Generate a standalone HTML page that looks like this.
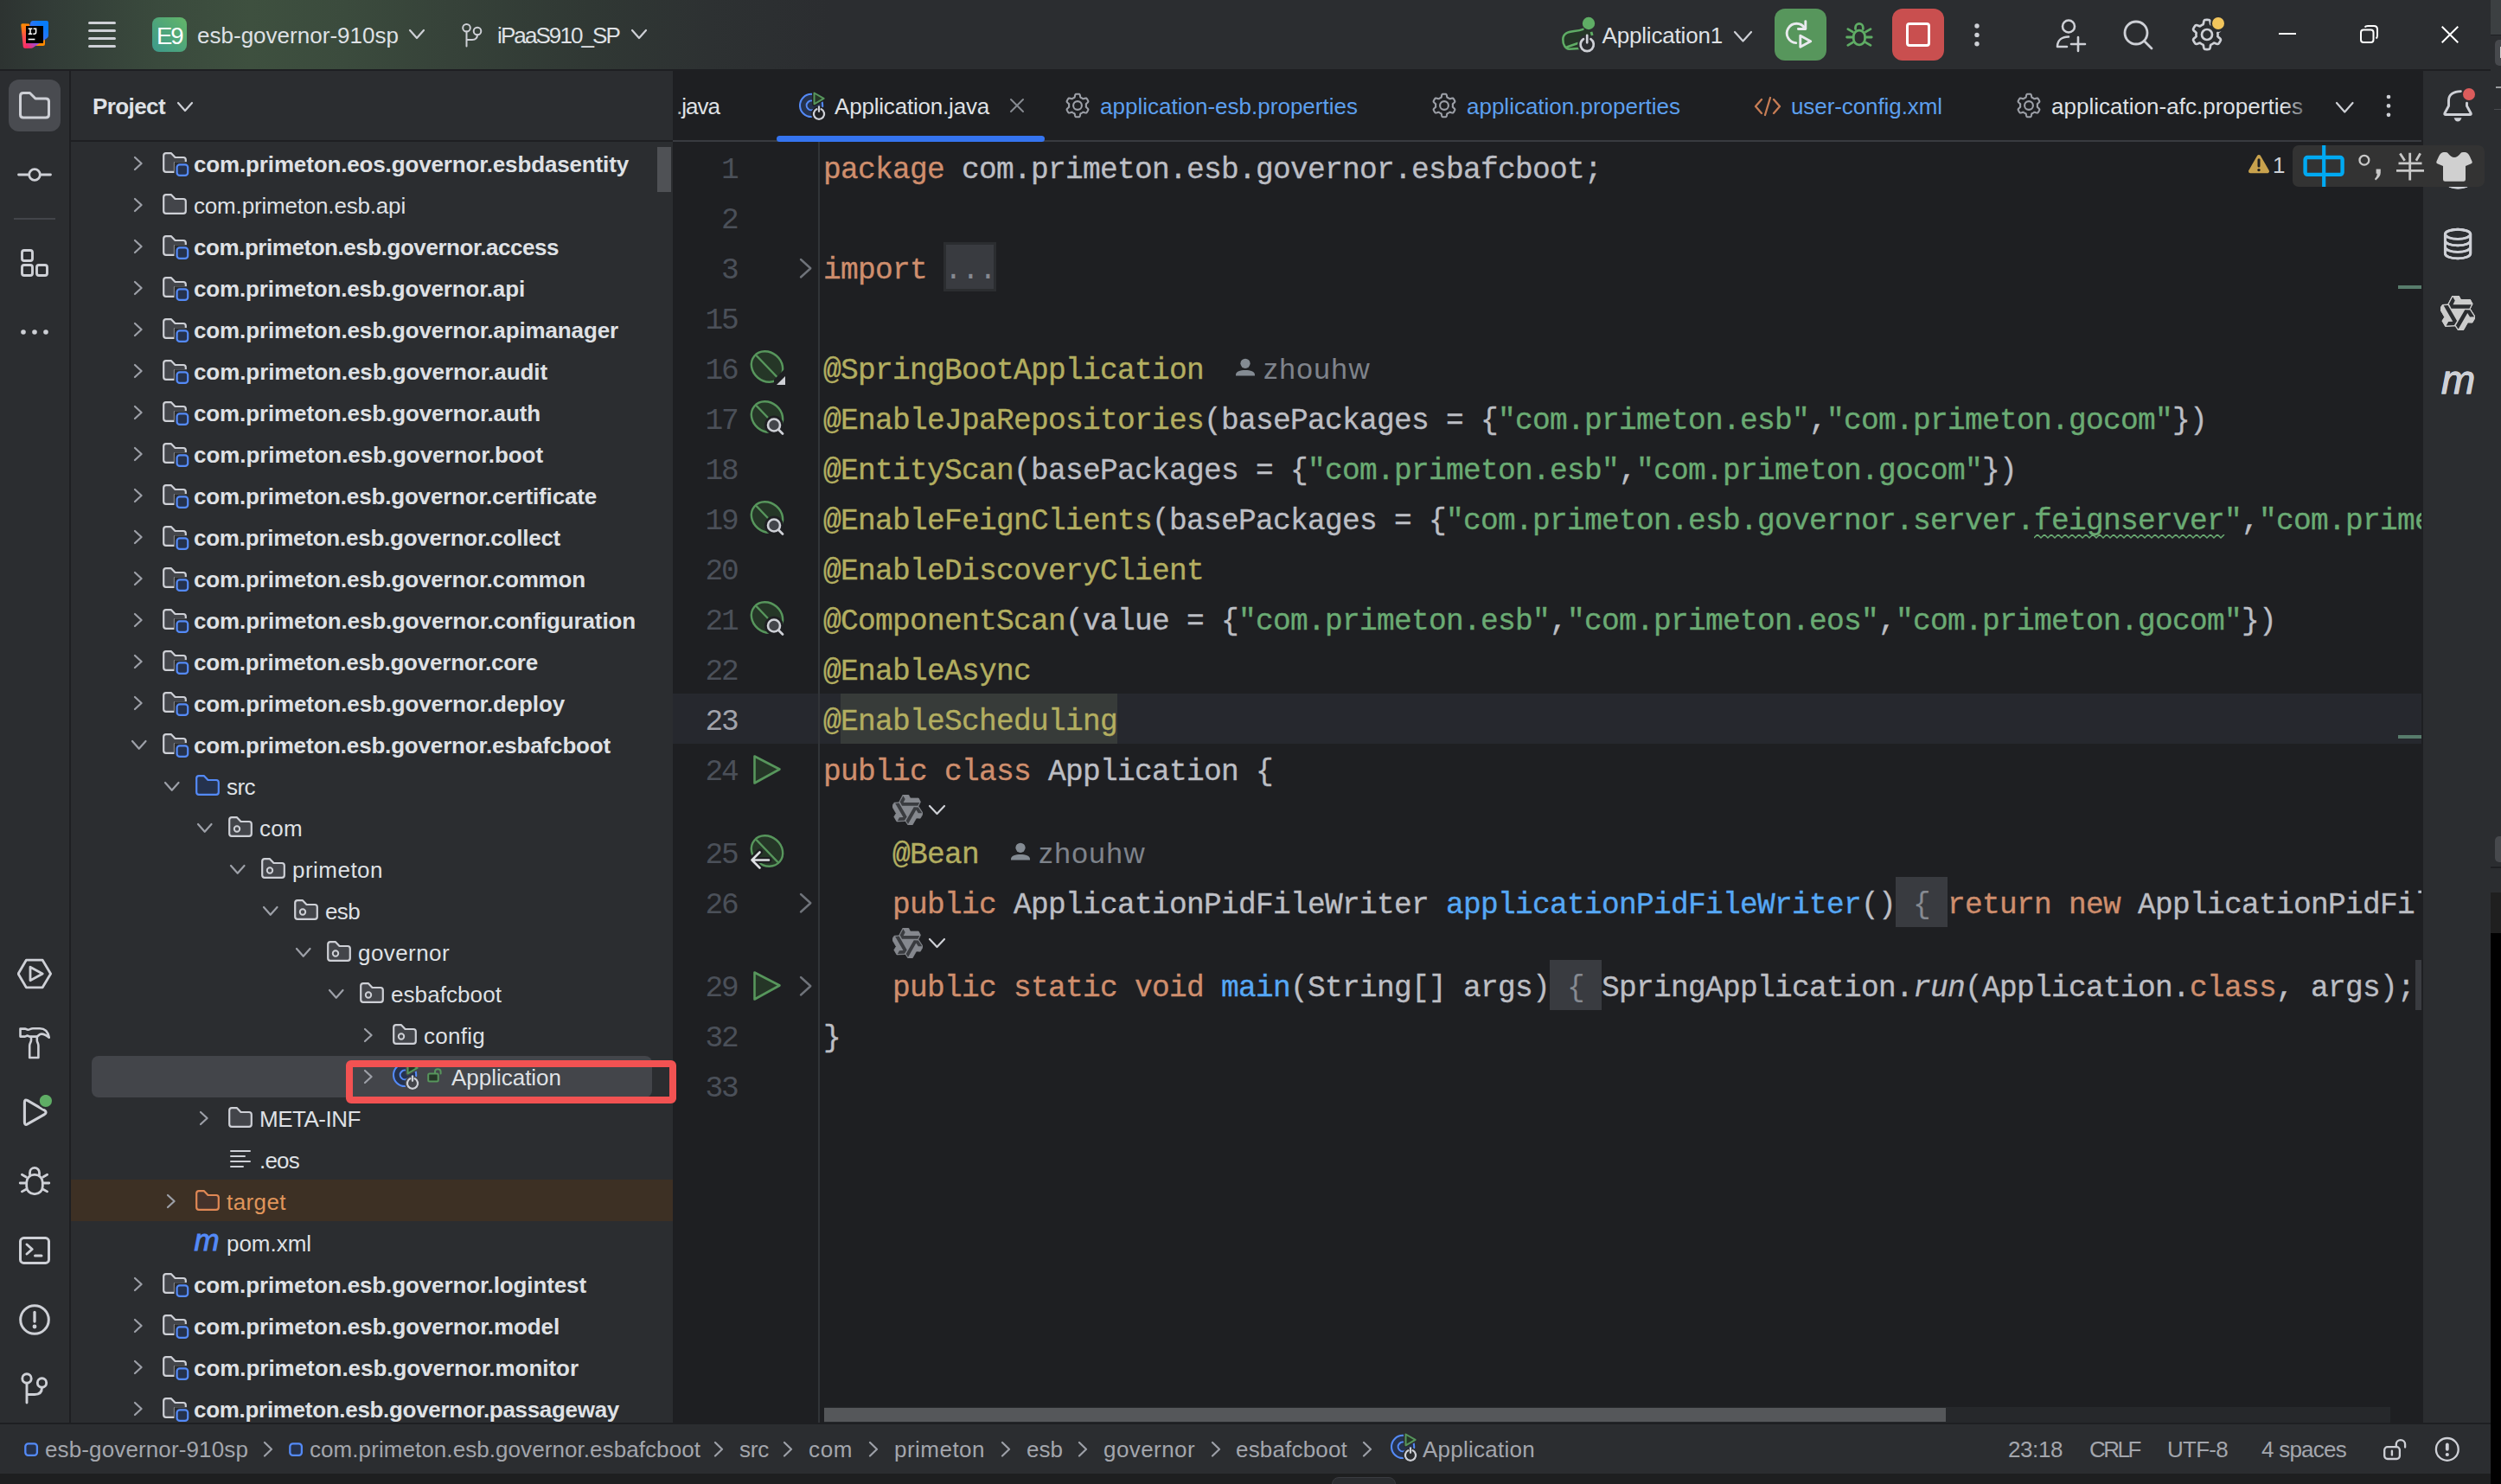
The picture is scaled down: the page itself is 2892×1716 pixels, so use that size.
<!DOCTYPE html><html><head><meta charset="utf-8"><title>IDE</title><style>*{margin:0;padding:0}html,body{width:2892px;height:1716px;overflow:hidden;background:#2B2D30}
body{position:relative;font-family:"Liberation Sans",sans-serif}
.r{position:absolute;display:block}
.t{position:absolute;white-space:pre;line-height:1;display:block}
</style></head><body>
<div class="r" style="left:0px;top:0px;width:2880px;height:80px;background:#2B2D30;background:linear-gradient(90deg,#2d3331 0px,#323c37 60px,#3a4a3d 180px,#3e503f 290px,#3b4b3d 400px,#364239 520px,#303834 680px,#2d3132 820px,#2B2D30 960px);"></div>
<div class="r" style="left:0px;top:80px;width:2880px;height:2px;background:#1E1F22;"></div>
<div class="r" style="left:0px;top:82px;width:80px;height:1565px;background:#2B2D30;"></div>
<div class="r" style="left:80px;top:82px;width:2px;height:1565px;background:#1E1F22;"></div>
<div class="r" style="left:82px;top:82px;width:696px;height:1565px;background:#2B2D30;"></div>
<div class="r" style="left:82px;top:162px;width:696px;height:2px;background:#1E1F22;"></div>
<div class="r" style="left:778px;top:82px;width:2024px;height:1565px;background:#1E1F22;"></div>
<div class="r" style="left:2802px;top:82px;width:78px;height:1565px;background:#2B2D30;"></div>
<div class="r" style="left:0px;top:1645px;width:2880px;height:2px;background:#1E1F22;"></div>
<div class="r" style="left:0px;top:1647px;width:2880px;height:57px;background:#2B2D30;"></div>
<div class="r" style="left:0px;top:1704px;width:2892px;height:12px;background:#1E1F20;"></div>
<div class="r" style="left:2880px;top:0px;width:12px;height:1716px;background:#2B2D30;"></div>
<div class="r" style="left:2880px;top:0px;width:12px;height:40px;background:#3C4042;"></div>
<div class="r" style="left:2880px;top:40px;width:12px;height:1px;background:#1E1F22;"></div>
<div class="r" style="left:2885px;top:46px;width:7px;height:30px;background:#47494D;border-radius:5px 0 0 5px;"></div>
<div class="r" style="left:2890.5px;top:54px;width:2px;height:13px;background:#d0d0d0;"></div>
<div class="r" style="left:2886px;top:100px;width:6px;height:2px;background:#9a9c9f;"></div>
<div class="r" style="left:2884px;top:126px;width:8px;height:1px;background:#4a4c50;"></div>
<div class="r" style="left:2885px;top:967px;width:7px;height:30px;background:#47494D;border-radius:5px 0 0 5px;"></div>
<div class="r" style="left:2880px;top:1002px;width:12px;height:1.5px;background:#1E1F22;"></div>
<div class="r" style="left:2880px;top:1032px;width:12px;height:48px;background:#1F1F1F;"></div>
<div class="r" style="left:2880px;top:1079px;width:12px;height:637px;background:#000;"></div>
<svg class="r" style="left:24px;top:24px;" width="32" height="32" viewBox="0 0 32 32" fill="none"><defs><linearGradient id="ijg1" x1="0.3" y1="0" x2="0.5" y2="1"><stop offset="0" stop-color="#FF8A00"/><stop offset=".5" stop-color="#FF4D4D"/><stop offset="1" stop-color="#FF2D6E"/></linearGradient>
<linearGradient id="ijg2" x1="0.1" y1="1" x2="0.8" y2="0.2"><stop offset="0" stop-color="#FE2857"/><stop offset=".35" stop-color="#A04DD8"/><stop offset=".7" stop-color="#2F73F5"/><stop offset="1" stop-color="#087CFA"/></linearGradient></defs>
<path d="M9 8 L28 22 L28 27 Q28 29 26 29 L16 29 Z" fill="#FF8A00"/>
<path d="M0.3 5 Q0.1 3.2 2 3.2 L9.5 3.4 L20 20 L14 31 L5 31.8 Q3 32 2.8 30 Z" fill="url(#ijg1)"/>
<path d="M11.5 1.5 Q12 0 14 0 L30 0 Q32 0 32 2 L32 17 Q32 19 30.5 20 L14 31.2 Q12.5 32 8 31.8 L5 31.5 L8.5 12 Z" fill="url(#ijg2)"/>
<rect x="6" y="6" width="20" height="20" fill="#000"/>
<path d="M8.6 21.5 H16.4" stroke="#fff" stroke-width="1.6"/>
<path d="M8.7 9.2 H13.3 M8.7 15.2 H13.3 M11 9.2 V15.2" stroke="#fff" stroke-width="1.5" fill="none"/>
<path d="M14.6 9.2 H17.6 V13.2 Q17.6 15.2 15.6 15.2 L14.3 15.2" stroke="#fff" stroke-width="1.5" fill="none"/></svg>
<svg class="r" style="left:102px;top:25px;" width="32" height="31" viewBox="0 0 32 31" fill="none"><path d="M1.5 1.5 H30.5 M1.5 10.5 H30.5 M1.5 19.5 H30.5 M1.5 28.5 H30.5 " stroke="#CED0D6" stroke-width="3" fill="none" stroke-linecap="round" stroke-linejoin="round" /></svg>
<div class="r" style="left:176px;top:20px;width:40px;height:40px;background:#3d9f73;border-radius:8px;background:linear-gradient(45deg,#3f9b8a 5%,#4fa67a 50%,#62b46a 95%);"></div>
<span class="t" style="left:181.00px;top:28.22px;font-size:27.5px;color:#fff;letter-spacing:-2.069px;">E9</span>
<span class="t" style="left:228.00px;top:27.99px;font-size:26px;color:#DFE1E5;letter-spacing:0.017px;">esb-governor-910sp</span>
<svg class="r" style="left:472px;top:33px;" width="20" height="13" viewBox="0 0 20 13" fill="none"><path d="M2 2 L10.0 11 L18 2" stroke="#CED0D6" stroke-width="2.2" fill="none" stroke-linecap="round" stroke-linejoin="round" /></svg>
<svg class="r" style="left:534px;top:26px;" width="24" height="30" viewBox="0 0 24 30" fill="none"><circle cx="5.5" cy="6.3" r="4.3" stroke="#CED0D6" stroke-width="2" fill="none"/><circle cx="18" cy="10" r="4.3" stroke="#CED0D6" stroke-width="2" fill="none"/><path d="M5.5 10.6 V27.5 M18 14.3 Q18 20 12 20 L5.5 20" stroke="#CED0D6" stroke-width="2" fill="none" stroke-linecap="round" stroke-linejoin="round" /></svg>
<span class="t" style="left:575.00px;top:27.99px;font-size:26px;color:#DFE1E5;letter-spacing:-1.901px;">iPaaS910_SP</span>
<svg class="r" style="left:729px;top:33px;" width="20" height="13" viewBox="0 0 20 13" fill="none"><path d="M2 2 L10.0 11 L18 2" stroke="#CED0D6" stroke-width="2.2" fill="none" stroke-linecap="round" stroke-linejoin="round" /></svg>
<svg class="r" style="left:1800px;top:12px;" width="60" height="60" viewBox="0 0 60 60" fill="none"><path d="M30.5 21.8 C20 25.8 7.6 22.5 7.3 33.5 C7.1 40 10.5 44.6 14.5 44.8 L26 44 L34 40 L40 30 L40 24 Z" fill="#253627"/><path d="M30.5 21.8 C20 25.8 7.6 22.5 7.3 33.5 C7.1 40 10.5 44.6 14.5 44.8 L26 44" stroke="#5FAD65" stroke-width="2.5" fill="none" stroke-linecap="round"/><path d="M12.3 42.2 L24.5 38" stroke="#5FAD65" stroke-width="2.5" fill="none" stroke-linecap="round"/><path d="M40 24.8 L41.2 29" stroke="#5FAD65" stroke-width="2.8" fill="none"/><circle cx="37" cy="15" r="7.2" fill="#5FAD65"/><circle cx="35.2" cy="39.6" r="11" fill="#2B2D30"/><path d="M31 33.2 A7.6 7.6 0 1 0 39.4 33.2 M35.2 28.8 V37.3" stroke="#CED0D6" stroke-width="2.7" fill="none" stroke-linecap="round" stroke-linejoin="round" /></svg>
<span class="t" style="left:1852.50px;top:27.99px;font-size:26px;color:#DFE1E5;letter-spacing:-0.180px;">Application1</span>
<svg class="r" style="left:2004px;top:35px;" width="23" height="14.5" viewBox="0 0 23 14.5" fill="none"><path d="M2 2 L11.5 12.5 L21 2" stroke="#CED0D6" stroke-width="2.2" fill="none" stroke-linecap="round" stroke-linejoin="round" /></svg>
<div class="r" style="left:2052px;top:10px;width:60px;height:60px;background:#57965C;border-radius:12px;"></div>
<svg class="r" style="left:2052px;top:10px;" width="60" height="60" viewBox="0 0 60 60" fill="none"><path d="M24.8 39.6 A11.2 11.2 0 1 1 35 22.6" stroke="#E9EAEE" stroke-width="2.9" fill="none" stroke-linecap="round" stroke-linejoin="round" /><path d="M35.8 14.6 V23.5 H27.4" stroke="#E9EAEE" stroke-width="2.9" fill="none" stroke-linecap="round" stroke-linejoin="round" /><path d="M29.8 31.3 L41.7 37.7 L29.8 44.3 Z" stroke="#E9EAEE" stroke-width="2.9" fill="#57965C" stroke-linejoin="round"/></svg>
<svg class="r" style="left:2132px;top:23px;" width="36.0" height="34.0" viewBox="0 0 36 34" fill="none"><rect x="11.3" y="12.2" width="13.2" height="16.6" rx="6.4" ry="6.8" stroke="#5FAD65" stroke-width="2.8" fill="none"/><path d="M13.5 10.6 V9 A4.4 4.6 0 0 1 22.3 9 V10.6" stroke="#5FAD65" stroke-width="2.8" fill="none" stroke-linecap="round" stroke-linejoin="round" /><path d="M3.6 20 H9.8 M26 20 H32.2 M4.8 10.6 L10.4 13.9 M31 10.6 L25.4 13.9 M4.8 29.4 L10.4 26.1 M31 29.4 L25.4 26.1" stroke="#5FAD65" stroke-width="2.8" fill="none" stroke-linecap="round" stroke-linejoin="round" /></svg>
<div class="r" style="left:2188px;top:10px;width:60px;height:60px;background:#C94F4F;border-radius:12px;"></div>
<div class="r" style="left:2204px;top:26px;width:28px;height:28px;background:transparent;border:3.5px solid #fff;border-radius:4px;box-sizing:border-box;"></div>
<svg class="r" style="left:2282px;top:25.6px;" width="8" height="29" viewBox="0 0 8 29" fill="none"><circle cx="4" cy="4.0" r="2.7" fill="#CED0D6"/><circle cx="4" cy="14.4" r="2.7" fill="#CED0D6"/><circle cx="4" cy="24.8" r="2.7" fill="#CED0D6"/></svg>
<svg class="r" style="left:2376px;top:20px;" width="38" height="42" viewBox="0 0 38 42" fill="none"><circle cx="16" cy="10.5" r="7" stroke="#CED0D6" stroke-width="2.6" fill="none"/><path d="M3 34 C3 26 9 22.5 16 22.5 M3 34 H14" stroke="#CED0D6" stroke-width="2.6" fill="none" stroke-linecap="round" stroke-linejoin="round" /><path d="M27 23 V39 M19 31 H35" stroke="#CED0D6" stroke-width="2.6" fill="none" stroke-linecap="round" stroke-linejoin="round" /></svg>
<svg class="r" style="left:2455px;top:22px;" width="36" height="38" viewBox="0 0 36 38" fill="none"><circle cx="15" cy="16" r="13" stroke="#CED0D6" stroke-width="2.8" fill="none"/><path d="M24.5 25.5 L33 34" stroke="#CED0D6" stroke-width="2.8" fill="none" stroke-linecap="round" stroke-linejoin="round" /></svg>
<svg class="r" style="left:2532px;top:21px;" width="40" height="40" viewBox="0 0 40 40" fill="none"><path d="M20.00 1.90 L20.89 1.92 L21.79 1.99 L22.68 2.11 L23.40 2.99 L23.83 4.70 L24.09 6.41 L24.48 7.33 L25.08 7.58 L25.67 7.86 L26.25 8.17 L26.81 8.52 L27.35 8.89 L27.87 9.29 L28.86 9.16 L30.47 8.53 L32.16 8.05 L33.29 8.24 L33.83 8.95 L34.34 9.69 L34.81 10.45 L35.24 11.24 L35.62 12.04 L35.96 12.87 L35.56 13.94 L34.30 15.17 L32.95 16.25 L32.35 17.04 L32.43 17.69 L32.48 18.35 L32.50 19.00 L32.48 19.65 L32.43 20.31 L32.35 20.96 L32.95 21.75 L34.30 22.83 L35.56 24.06 L35.96 25.13 L35.62 25.96 L35.24 26.76 L34.81 27.55 L34.34 28.31 L33.83 29.05 L33.29 29.76 L32.16 29.95 L30.47 29.47 L28.86 28.84 L27.87 28.71 L27.35 29.11 L26.81 29.48 L26.25 29.83 L25.67 30.14 L25.08 30.42 L24.48 30.67 L24.09 31.59 L23.83 33.30 L23.40 35.01 L22.68 35.89 L21.79 36.01 L20.89 36.08 L20.00 36.10 L19.11 36.08 L18.21 36.01 L17.32 35.89 L16.60 35.01 L16.17 33.30 L15.91 31.59 L15.52 30.67 L14.92 30.42 L14.33 30.14 L13.75 29.83 L13.19 29.48 L12.65 29.11 L12.13 28.71 L11.14 28.84 L9.53 29.47 L7.84 29.95 L6.71 29.76 L6.17 29.05 L5.66 28.31 L5.19 27.55 L4.76 26.76 L4.38 25.96 L4.04 25.13 L4.44 24.06 L5.70 22.83 L7.05 21.75 L7.65 20.96 L7.57 20.31 L7.52 19.65 L7.50 19.00 L7.52 18.35 L7.57 17.69 L7.65 17.04 L7.05 16.25 L5.70 15.17 L4.44 13.94 L4.04 12.87 L4.38 12.04 L4.76 11.24 L5.19 10.45 L5.66 9.69 L6.17 8.95 L6.71 8.24 L7.84 8.05 L9.53 8.53 L11.14 9.16 L12.13 9.29 L12.65 8.89 L13.19 8.52 L13.75 8.17 L14.33 7.86 L14.92 7.58 L15.52 7.33 L15.91 6.41 L16.17 4.70 L16.60 2.99 L17.32 2.11 L18.21 1.99 L19.11 1.92 Z" stroke="#CED0D6" stroke-width="2.7" fill="none" stroke-linecap="round" stroke-linejoin="round" /><circle cx="20" cy="19" r="6" stroke="#CED0D6" stroke-width="2.7" fill="none"/></svg>
<div class="r" style="left:2555.5px;top:17.5px;width:19px;height:19px;background:#2B2D30;border-radius:50%;"></div>
<div class="r" style="left:2558px;top:20px;width:14px;height:14px;background:#F2C55C;border-radius:50%;"></div>
<div class="r" style="left:2635px;top:38px;width:20px;height:2px;background:#fff;"></div>
<svg class="r" style="left:2729px;top:29px;" width="21" height="21" viewBox="0 0 21 21" fill="none"><rect x="1" y="5.5" width="14.5" height="14.5" rx="3" stroke="#fff" stroke-width="2" fill="none"/><path d="M5.5 2.5 Q6.5 1 9 1 L16 1 Q20 1 20 5 L20 12 Q20 14.5 18.5 15.5" stroke="#fff" stroke-width="2" fill="none"/></svg>
<svg class="r" style="left:2823px;top:30px;" width="20" height="20" viewBox="0 0 20 20" fill="none"><path d="M0.7 0.7 L19.3 19.3 M19.3 0.7 L0.7 19.3" stroke="#fff" stroke-width="2"/></svg>
<div class="r" style="left:10px;top:92px;width:60px;height:60px;background:#494B50;border-radius:12px;"></div>
<svg class="r" style="left:22px;top:106px;" width="36" height="32" viewBox="0 0 36 32" fill="none"><path d="M1.5 5 Q1.5 1.5 5 1.5 L12.5 1.5 L19 8 L31 8 Q34.5 8 34.5 11.5 L34.5 26.5 Q34.5 30 31 30 L5 30 Q1.5 30 1.5 26.5 Z" stroke="#CED0D6" stroke-width="3" fill="none" stroke-linecap="round" stroke-linejoin="round" /></svg>
<svg class="r" style="left:20px;top:192px;" width="40" height="20" viewBox="0 0 40 20" fill="none"><circle cx="20" cy="10" r="6.3" stroke="#CED0D6" stroke-width="2.8" fill="none"/><path d="M1.5 10 H13.5 M26.5 10 H38.5" stroke="#CED0D6" stroke-width="2.8" fill="none" stroke-linecap="round" stroke-linejoin="round" /></svg>
<div class="r" style="left:16px;top:252px;width:48px;height:2px;background:#43454A;"></div>
<svg class="r" style="left:24px;top:288px;" width="32" height="32" viewBox="0 0 32 32" fill="none"><rect x="1.5" y="1.5" width="12" height="12" rx="2.5" stroke="#CED0D6" stroke-width="2.9" fill="none"/><rect x="1.5" y="18.5" width="12" height="12" rx="2.5" stroke="#CED0D6" stroke-width="2.9" fill="none"/><rect x="18.5" y="18.5" width="12" height="12" rx="2.5" stroke="#CED0D6" stroke-width="2.9" fill="none"/></svg>
<svg class="r" style="left:24px;top:381px;" width="33" height="6" viewBox="0 0 33 6" fill="none"><circle cx="3" cy="3" r="2.8" fill="#CED0D6"/><circle cx="16" cy="3" r="2.8" fill="#CED0D6"/><circle cx="29" cy="3" r="2.8" fill="#CED0D6"/></svg>
<svg class="r" style="left:20px;top:1106px;" width="40" height="40" viewBox="0 0 40 40" fill="none"><path d="M10.3 4.2 L29.2 4.2 L38.6 20 L29.2 35.8 L10.3 35.8 L1.1 20 Z" stroke="#CED0D6" stroke-width="2.8" fill="none" stroke-linecap="round" stroke-linejoin="round" /><path d="M15 12.2 L29.2 20 L15 27.7 Z" stroke="#CED0D6" stroke-width="2.8" fill="none" stroke-linecap="round" stroke-linejoin="round" /></svg>
<svg class="r" style="left:20px;top:1186px;" width="40" height="40" viewBox="0 0 40 40" fill="none"><path d="M3.5 3.6 L9 3.6 C10.3 3.6 10.8 4.8 12.3 4.8 C14.3 4.8 15.2 3.3 18 3.3 L26 3.3 C32.5 3.3 35.8 8.5 36.8 13.8 C33.5 10.8 30.5 9.6 28 9.6 C25 9.6 24.6 12.2 22.5 12.6 L14.5 12.6 C13.3 12.6 12.8 11.6 11.6 11.6 C10.3 11.6 10 12.6 8.5 12.6 L3.5 12.6 Z" stroke="#CED0D6" stroke-width="2.6" fill="none" stroke-linecap="round" stroke-linejoin="round" /><path d="M16 13 L16 17 C16 19.2 14.2 20.2 14.2 23 L14.2 37 L24.4 37 L24.4 23 C24.4 20.2 22.8 19.2 22.8 17 L22.8 13" stroke="#CED0D6" stroke-width="2.6" fill="none" stroke-linecap="round" stroke-linejoin="round" /></svg>
<svg class="r" style="left:20px;top:1266px;" width="40" height="40" viewBox="0 0 40 40" fill="none"><path d="M8.4 8.8 Q8.4 4.6 12 6.7 L31.4 17.8 Q34.8 20.2 31.4 22.6 L12 33.7 Q8.4 35.8 8.4 31.6 Z" stroke="#CED0D6" stroke-width="3.1" fill="none" stroke-linecap="round" stroke-linejoin="round" /><circle cx="32.9" cy="7" r="9.2" fill="#2B2D30"/><circle cx="32.9" cy="7" r="7.1" fill="#5FAD65"/></svg>
<svg class="r" style="left:20px;top:1346px;" width="40" height="40" viewBox="0 0 40 40" fill="none"><rect x="10.7" y="12.4" width="18.6" height="22.2" rx="8.6" ry="8.8" stroke="#CED0D6" stroke-width="2.8" fill="none"/><path d="M14.5 12.2 V9.9 A5.5 5.5 0 0 1 25.5 9.9 V12.2" stroke="#CED0D6" stroke-width="2.8" fill="none" stroke-linecap="round" stroke-linejoin="round" /><path d="M3.2 22 H9.3 M30.7 22 H36.8 M5.4 12.3 L10.2 15 M34.6 12.3 L29.8 15 M5.4 31.9 L10.2 29.2 M34.6 31.9 L29.8 29.2" stroke="#CED0D6" stroke-width="2.8" fill="none" stroke-linecap="round" stroke-linejoin="round" /></svg>
<svg class="r" style="left:20px;top:1426px;" width="40" height="40" viewBox="0 0 40 40" fill="none"><rect x="3.5" y="5.6" width="33" height="28.8" rx="4" stroke="#CED0D6" stroke-width="3" fill="none"/><path d="M11 13 L17.2 18.5 L11 24 M20.5 26 H28" stroke="#CED0D6" stroke-width="3" fill="none" stroke-linecap="round" stroke-linejoin="round" /></svg>
<svg class="r" style="left:20px;top:1506px;" width="40" height="40" viewBox="0 0 40 40" fill="none"><circle cx="20" cy="20" r="16.3" stroke="#CED0D6" stroke-width="3" fill="none"/><path d="M20 11.5 V22" stroke="#CED0D6" stroke-width="3.3" fill="none" stroke-linecap="round" stroke-linejoin="round" /><circle cx="20" cy="28" r="2.4" fill="#CED0D6"/></svg>
<svg class="r" style="left:20px;top:1586px;" width="40" height="44" viewBox="0 0 40 44" fill="none"><circle cx="11" cy="8" r="5.2" stroke="#CED0D6" stroke-width="2.9" fill="none"/><circle cx="28.5" cy="13" r="5.2" stroke="#CED0D6" stroke-width="2.9" fill="none"/><path d="M11 13.5 V36 M28.5 18.5 Q28.5 26.5 20 26.5 L11 26.5" stroke="#CED0D6" stroke-width="2.9" fill="none" stroke-linecap="round" stroke-linejoin="round" /></svg>
<span class="t" style="left:107.00px;top:109.99px;font-size:26px;color:#DFE1E5;font-weight:bold;letter-spacing:-0.592px;">Project</span>
<svg class="r" style="left:204px;top:117px;" width="20" height="13" viewBox="0 0 20 13" fill="none"><path d="M2 2 L10.0 11 L18 2" stroke="#CED0D6" stroke-width="2.2" fill="none" stroke-linecap="round" stroke-linejoin="round" /></svg>
<div class="r" style="left:760px;top:170px;width:16px;height:52px;background:#4F5155;"></div>
<div class="r" style="left:82px;top:1364px;width:696px;height:48px;background:#3D3024;"></div>
<div class="r" style="left:106px;top:1221px;width:648px;height:48px;background:#43454A;border-radius:8px;"></div>
<svg class="r" style="left:154px;top:180px;" width="11.6" height="18" viewBox="0 0 11.6 18" fill="none"><path d="M2 2 L9.6 9.0 L2 16" stroke="#9DA0A8" stroke-width="2.2" fill="none" stroke-linecap="round" stroke-linejoin="round" /></svg>
<svg class="r" style="left:188px;top:175.5px;" width="32" height="30" viewBox="0 0 32 30" fill="none"><path d="M1.2 4 Q1.2 1.2 4 1.2 L10 1.2 L14.5 6 L24 6 Q26.8 6 26.8 8.8 L26.8 12 L14 12 L14 22.8 L4 22.8 Q1.2 22.8 1.2 20 Z" stroke="#CED0D6" stroke-width="2.2" fill="#43454A" stroke-linecap="round" stroke-linejoin="round" /><rect x="13.5" y="11.2" width="18" height="18" fill="#2B2D30"/><rect x="16.6" y="14.3" width="12.6" height="12.6" rx="3.2" stroke="#548AF7" stroke-width="2.2" fill="#25324D"/></svg>
<span class="t" style="left:224.00px;top:177.19px;font-size:26px;color:#DFE1E5;font-weight:bold;letter-spacing:-0.147px;">com.primeton.eos.governor.esbdasentity</span>
<svg class="r" style="left:154px;top:228px;" width="11.6" height="18" viewBox="0 0 11.6 18" fill="none"><path d="M2 2 L9.6 9.0 L2 16" stroke="#9DA0A8" stroke-width="2.2" fill="none" stroke-linecap="round" stroke-linejoin="round" /></svg>
<svg class="r" style="left:188px;top:223.5px;" width="28" height="24" viewBox="0 0 28 24" fill="none"><path d="M1.2 4 Q1.2 1.2 4 1.2 L10 1.2 L14.5 6 L24 6 Q26.8 6 26.8 8.8 L26.8 20 Q26.8 22.8 24 22.8 L4 22.8 Q1.2 22.8 1.2 20 Z" stroke="#CED0D6" stroke-width="2.2" fill="#43454A" stroke-linecap="round" stroke-linejoin="round" /></svg>
<span class="t" style="left:224.00px;top:225.19px;font-size:26px;color:#DFE1E5;letter-spacing:-0.178px;">com.primeton.esb.api</span>
<svg class="r" style="left:154px;top:276px;" width="11.6" height="18" viewBox="0 0 11.6 18" fill="none"><path d="M2 2 L9.6 9.0 L2 16" stroke="#9DA0A8" stroke-width="2.2" fill="none" stroke-linecap="round" stroke-linejoin="round" /></svg>
<svg class="r" style="left:188px;top:271.5px;" width="32" height="30" viewBox="0 0 32 30" fill="none"><path d="M1.2 4 Q1.2 1.2 4 1.2 L10 1.2 L14.5 6 L24 6 Q26.8 6 26.8 8.8 L26.8 12 L14 12 L14 22.8 L4 22.8 Q1.2 22.8 1.2 20 Z" stroke="#CED0D6" stroke-width="2.2" fill="#43454A" stroke-linecap="round" stroke-linejoin="round" /><rect x="13.5" y="11.2" width="18" height="18" fill="#2B2D30"/><rect x="16.6" y="14.3" width="12.6" height="12.6" rx="3.2" stroke="#548AF7" stroke-width="2.2" fill="#25324D"/></svg>
<span class="t" style="left:224.00px;top:273.19px;font-size:26px;color:#DFE1E5;font-weight:bold;letter-spacing:-0.450px;">com.primeton.esb.governor.access</span>
<svg class="r" style="left:154px;top:324px;" width="11.6" height="18" viewBox="0 0 11.6 18" fill="none"><path d="M2 2 L9.6 9.0 L2 16" stroke="#9DA0A8" stroke-width="2.2" fill="none" stroke-linecap="round" stroke-linejoin="round" /></svg>
<svg class="r" style="left:188px;top:319.5px;" width="32" height="30" viewBox="0 0 32 30" fill="none"><path d="M1.2 4 Q1.2 1.2 4 1.2 L10 1.2 L14.5 6 L24 6 Q26.8 6 26.8 8.8 L26.8 12 L14 12 L14 22.8 L4 22.8 Q1.2 22.8 1.2 20 Z" stroke="#CED0D6" stroke-width="2.2" fill="#43454A" stroke-linecap="round" stroke-linejoin="round" /><rect x="13.5" y="11.2" width="18" height="18" fill="#2B2D30"/><rect x="16.6" y="14.3" width="12.6" height="12.6" rx="3.2" stroke="#548AF7" stroke-width="2.2" fill="#25324D"/></svg>
<span class="t" style="left:224.00px;top:321.19px;font-size:26px;color:#DFE1E5;font-weight:bold;letter-spacing:-0.145px;">com.primeton.esb.governor.api</span>
<svg class="r" style="left:154px;top:372px;" width="11.6" height="18" viewBox="0 0 11.6 18" fill="none"><path d="M2 2 L9.6 9.0 L2 16" stroke="#9DA0A8" stroke-width="2.2" fill="none" stroke-linecap="round" stroke-linejoin="round" /></svg>
<svg class="r" style="left:188px;top:367.5px;" width="32" height="30" viewBox="0 0 32 30" fill="none"><path d="M1.2 4 Q1.2 1.2 4 1.2 L10 1.2 L14.5 6 L24 6 Q26.8 6 26.8 8.8 L26.8 12 L14 12 L14 22.8 L4 22.8 Q1.2 22.8 1.2 20 Z" stroke="#CED0D6" stroke-width="2.2" fill="#43454A" stroke-linecap="round" stroke-linejoin="round" /><rect x="13.5" y="11.2" width="18" height="18" fill="#2B2D30"/><rect x="16.6" y="14.3" width="12.6" height="12.6" rx="3.2" stroke="#548AF7" stroke-width="2.2" fill="#25324D"/></svg>
<span class="t" style="left:224.00px;top:369.19px;font-size:26px;color:#DFE1E5;font-weight:bold;letter-spacing:-0.127px;">com.primeton.esb.governor.apimanager</span>
<svg class="r" style="left:154px;top:420px;" width="11.6" height="18" viewBox="0 0 11.6 18" fill="none"><path d="M2 2 L9.6 9.0 L2 16" stroke="#9DA0A8" stroke-width="2.2" fill="none" stroke-linecap="round" stroke-linejoin="round" /></svg>
<svg class="r" style="left:188px;top:415.5px;" width="32" height="30" viewBox="0 0 32 30" fill="none"><path d="M1.2 4 Q1.2 1.2 4 1.2 L10 1.2 L14.5 6 L24 6 Q26.8 6 26.8 8.8 L26.8 12 L14 12 L14 22.8 L4 22.8 Q1.2 22.8 1.2 20 Z" stroke="#CED0D6" stroke-width="2.2" fill="#43454A" stroke-linecap="round" stroke-linejoin="round" /><rect x="13.5" y="11.2" width="18" height="18" fill="#2B2D30"/><rect x="16.6" y="14.3" width="12.6" height="12.6" rx="3.2" stroke="#548AF7" stroke-width="2.2" fill="#25324D"/></svg>
<span class="t" style="left:224.00px;top:417.19px;font-size:26px;color:#DFE1E5;font-weight:bold;letter-spacing:-0.088px;">com.primeton.esb.governor.audit</span>
<svg class="r" style="left:154px;top:468px;" width="11.6" height="18" viewBox="0 0 11.6 18" fill="none"><path d="M2 2 L9.6 9.0 L2 16" stroke="#9DA0A8" stroke-width="2.2" fill="none" stroke-linecap="round" stroke-linejoin="round" /></svg>
<svg class="r" style="left:188px;top:463.5px;" width="32" height="30" viewBox="0 0 32 30" fill="none"><path d="M1.2 4 Q1.2 1.2 4 1.2 L10 1.2 L14.5 6 L24 6 Q26.8 6 26.8 8.8 L26.8 12 L14 12 L14 22.8 L4 22.8 Q1.2 22.8 1.2 20 Z" stroke="#CED0D6" stroke-width="2.2" fill="#43454A" stroke-linecap="round" stroke-linejoin="round" /><rect x="13.5" y="11.2" width="18" height="18" fill="#2B2D30"/><rect x="16.6" y="14.3" width="12.6" height="12.6" rx="3.2" stroke="#548AF7" stroke-width="2.2" fill="#25324D"/></svg>
<span class="t" style="left:224.00px;top:465.19px;font-size:26px;color:#DFE1E5;font-weight:bold;letter-spacing:-0.117px;">com.primeton.esb.governor.auth</span>
<svg class="r" style="left:154px;top:516px;" width="11.6" height="18" viewBox="0 0 11.6 18" fill="none"><path d="M2 2 L9.6 9.0 L2 16" stroke="#9DA0A8" stroke-width="2.2" fill="none" stroke-linecap="round" stroke-linejoin="round" /></svg>
<svg class="r" style="left:188px;top:511.5px;" width="32" height="30" viewBox="0 0 32 30" fill="none"><path d="M1.2 4 Q1.2 1.2 4 1.2 L10 1.2 L14.5 6 L24 6 Q26.8 6 26.8 8.8 L26.8 12 L14 12 L14 22.8 L4 22.8 Q1.2 22.8 1.2 20 Z" stroke="#CED0D6" stroke-width="2.2" fill="#43454A" stroke-linecap="round" stroke-linejoin="round" /><rect x="13.5" y="11.2" width="18" height="18" fill="#2B2D30"/><rect x="16.6" y="14.3" width="12.6" height="12.6" rx="3.2" stroke="#548AF7" stroke-width="2.2" fill="#25324D"/></svg>
<span class="t" style="left:224.00px;top:513.19px;font-size:26px;color:#DFE1E5;font-weight:bold;letter-spacing:-0.065px;">com.primeton.esb.governor.boot</span>
<svg class="r" style="left:154px;top:564px;" width="11.6" height="18" viewBox="0 0 11.6 18" fill="none"><path d="M2 2 L9.6 9.0 L2 16" stroke="#9DA0A8" stroke-width="2.2" fill="none" stroke-linecap="round" stroke-linejoin="round" /></svg>
<svg class="r" style="left:188px;top:559.5px;" width="32" height="30" viewBox="0 0 32 30" fill="none"><path d="M1.2 4 Q1.2 1.2 4 1.2 L10 1.2 L14.5 6 L24 6 Q26.8 6 26.8 8.8 L26.8 12 L14 12 L14 22.8 L4 22.8 Q1.2 22.8 1.2 20 Z" stroke="#CED0D6" stroke-width="2.2" fill="#43454A" stroke-linecap="round" stroke-linejoin="round" /><rect x="13.5" y="11.2" width="18" height="18" fill="#2B2D30"/><rect x="16.6" y="14.3" width="12.6" height="12.6" rx="3.2" stroke="#548AF7" stroke-width="2.2" fill="#25324D"/></svg>
<span class="t" style="left:224.00px;top:561.19px;font-size:26px;color:#DFE1E5;font-weight:bold;letter-spacing:-0.175px;">com.primeton.esb.governor.certificate</span>
<svg class="r" style="left:154px;top:612px;" width="11.6" height="18" viewBox="0 0 11.6 18" fill="none"><path d="M2 2 L9.6 9.0 L2 16" stroke="#9DA0A8" stroke-width="2.2" fill="none" stroke-linecap="round" stroke-linejoin="round" /></svg>
<svg class="r" style="left:188px;top:607.5px;" width="32" height="30" viewBox="0 0 32 30" fill="none"><path d="M1.2 4 Q1.2 1.2 4 1.2 L10 1.2 L14.5 6 L24 6 Q26.8 6 26.8 8.8 L26.8 12 L14 12 L14 22.8 L4 22.8 Q1.2 22.8 1.2 20 Z" stroke="#CED0D6" stroke-width="2.2" fill="#43454A" stroke-linecap="round" stroke-linejoin="round" /><rect x="13.5" y="11.2" width="18" height="18" fill="#2B2D30"/><rect x="16.6" y="14.3" width="12.6" height="12.6" rx="3.2" stroke="#548AF7" stroke-width="2.2" fill="#25324D"/></svg>
<span class="t" style="left:224.00px;top:609.19px;font-size:26px;color:#DFE1E5;font-weight:bold;letter-spacing:-0.242px;">com.primeton.esb.governor.collect</span>
<svg class="r" style="left:154px;top:660px;" width="11.6" height="18" viewBox="0 0 11.6 18" fill="none"><path d="M2 2 L9.6 9.0 L2 16" stroke="#9DA0A8" stroke-width="2.2" fill="none" stroke-linecap="round" stroke-linejoin="round" /></svg>
<svg class="r" style="left:188px;top:655.5px;" width="32" height="30" viewBox="0 0 32 30" fill="none"><path d="M1.2 4 Q1.2 1.2 4 1.2 L10 1.2 L14.5 6 L24 6 Q26.8 6 26.8 8.8 L26.8 12 L14 12 L14 22.8 L4 22.8 Q1.2 22.8 1.2 20 Z" stroke="#CED0D6" stroke-width="2.2" fill="#43454A" stroke-linecap="round" stroke-linejoin="round" /><rect x="13.5" y="11.2" width="18" height="18" fill="#2B2D30"/><rect x="16.6" y="14.3" width="12.6" height="12.6" rx="3.2" stroke="#548AF7" stroke-width="2.2" fill="#25324D"/></svg>
<span class="t" style="left:224.00px;top:657.19px;font-size:26px;color:#DFE1E5;font-weight:bold;letter-spacing:-0.155px;">com.primeton.esb.governor.common</span>
<svg class="r" style="left:154px;top:708px;" width="11.6" height="18" viewBox="0 0 11.6 18" fill="none"><path d="M2 2 L9.6 9.0 L2 16" stroke="#9DA0A8" stroke-width="2.2" fill="none" stroke-linecap="round" stroke-linejoin="round" /></svg>
<svg class="r" style="left:188px;top:703.5px;" width="32" height="30" viewBox="0 0 32 30" fill="none"><path d="M1.2 4 Q1.2 1.2 4 1.2 L10 1.2 L14.5 6 L24 6 Q26.8 6 26.8 8.8 L26.8 12 L14 12 L14 22.8 L4 22.8 Q1.2 22.8 1.2 20 Z" stroke="#CED0D6" stroke-width="2.2" fill="#43454A" stroke-linecap="round" stroke-linejoin="round" /><rect x="13.5" y="11.2" width="18" height="18" fill="#2B2D30"/><rect x="16.6" y="14.3" width="12.6" height="12.6" rx="3.2" stroke="#548AF7" stroke-width="2.2" fill="#25324D"/></svg>
<span class="t" style="left:224.00px;top:705.19px;font-size:26px;color:#DFE1E5;font-weight:bold;letter-spacing:-0.121px;">com.primeton.esb.governor.configuration</span>
<svg class="r" style="left:154px;top:756px;" width="11.6" height="18" viewBox="0 0 11.6 18" fill="none"><path d="M2 2 L9.6 9.0 L2 16" stroke="#9DA0A8" stroke-width="2.2" fill="none" stroke-linecap="round" stroke-linejoin="round" /></svg>
<svg class="r" style="left:188px;top:751.5px;" width="32" height="30" viewBox="0 0 32 30" fill="none"><path d="M1.2 4 Q1.2 1.2 4 1.2 L10 1.2 L14.5 6 L24 6 Q26.8 6 26.8 8.8 L26.8 12 L14 12 L14 22.8 L4 22.8 Q1.2 22.8 1.2 20 Z" stroke="#CED0D6" stroke-width="2.2" fill="#43454A" stroke-linecap="round" stroke-linejoin="round" /><rect x="13.5" y="11.2" width="18" height="18" fill="#2B2D30"/><rect x="16.6" y="14.3" width="12.6" height="12.6" rx="3.2" stroke="#548AF7" stroke-width="2.2" fill="#25324D"/></svg>
<span class="t" style="left:224.00px;top:753.19px;font-size:26px;color:#DFE1E5;font-weight:bold;letter-spacing:-0.218px;">com.primeton.esb.governor.core</span>
<svg class="r" style="left:154px;top:804px;" width="11.6" height="18" viewBox="0 0 11.6 18" fill="none"><path d="M2 2 L9.6 9.0 L2 16" stroke="#9DA0A8" stroke-width="2.2" fill="none" stroke-linecap="round" stroke-linejoin="round" /></svg>
<svg class="r" style="left:188px;top:799.5px;" width="32" height="30" viewBox="0 0 32 30" fill="none"><path d="M1.2 4 Q1.2 1.2 4 1.2 L10 1.2 L14.5 6 L24 6 Q26.8 6 26.8 8.8 L26.8 12 L14 12 L14 22.8 L4 22.8 Q1.2 22.8 1.2 20 Z" stroke="#CED0D6" stroke-width="2.2" fill="#43454A" stroke-linecap="round" stroke-linejoin="round" /><rect x="13.5" y="11.2" width="18" height="18" fill="#2B2D30"/><rect x="16.6" y="14.3" width="12.6" height="12.6" rx="3.2" stroke="#548AF7" stroke-width="2.2" fill="#25324D"/></svg>
<span class="t" style="left:224.00px;top:801.19px;font-size:26px;color:#DFE1E5;font-weight:bold;letter-spacing:-0.138px;">com.primeton.esb.governor.deploy</span>
<svg class="r" style="left:150.5px;top:854.5px;" width="19.5" height="12.8" viewBox="0 0 19.5 12.8" fill="none"><path d="M2 2 L9.75 10.8 L17.5 2" stroke="#9DA0A8" stroke-width="2.2" fill="none" stroke-linecap="round" stroke-linejoin="round" /></svg>
<svg class="r" style="left:188px;top:847.5px;" width="32" height="30" viewBox="0 0 32 30" fill="none"><path d="M1.2 4 Q1.2 1.2 4 1.2 L10 1.2 L14.5 6 L24 6 Q26.8 6 26.8 8.8 L26.8 12 L14 12 L14 22.8 L4 22.8 Q1.2 22.8 1.2 20 Z" stroke="#CED0D6" stroke-width="2.2" fill="#43454A" stroke-linecap="round" stroke-linejoin="round" /><rect x="13.5" y="11.2" width="18" height="18" fill="#2B2D30"/><rect x="16.6" y="14.3" width="12.6" height="12.6" rx="3.2" stroke="#548AF7" stroke-width="2.2" fill="#25324D"/></svg>
<span class="t" style="left:224.00px;top:849.19px;font-size:26px;color:#DFE1E5;font-weight:bold;letter-spacing:-0.176px;">com.primeton.esb.governor.esbafcboot</span>
<svg class="r" style="left:188.5px;top:902.5px;" width="19.5" height="12.8" viewBox="0 0 19.5 12.8" fill="none"><path d="M2 2 L9.75 10.8 L17.5 2" stroke="#9DA0A8" stroke-width="2.2" fill="none" stroke-linecap="round" stroke-linejoin="round" /></svg>
<svg class="r" style="left:226px;top:895.5px;" width="28" height="24" viewBox="0 0 28 24" fill="none"><path d="M1.2 4 Q1.2 1.2 4 1.2 L10 1.2 L14.5 6 L24 6 Q26.8 6 26.8 8.8 L26.8 20 Q26.8 22.8 24 22.8 L4 22.8 Q1.2 22.8 1.2 20 Z" stroke="#548AF7" stroke-width="2.2" fill="#25324D" stroke-linecap="round" stroke-linejoin="round" /></svg>
<span class="t" style="left:262.00px;top:897.19px;font-size:26px;color:#DFE1E5;letter-spacing:-0.553px;">src</span>
<svg class="r" style="left:226.5px;top:950.5px;" width="19.5" height="12.8" viewBox="0 0 19.5 12.8" fill="none"><path d="M2 2 L9.75 10.8 L17.5 2" stroke="#9DA0A8" stroke-width="2.2" fill="none" stroke-linecap="round" stroke-linejoin="round" /></svg>
<svg class="r" style="left:264px;top:943.5px;" width="28" height="24" viewBox="0 0 28 24" fill="none"><path d="M1.2 4 Q1.2 1.2 4 1.2 L10 1.2 L14.5 6 L24 6 Q26.8 6 26.8 8.8 L26.8 20 Q26.8 22.8 24 22.8 L4 22.8 Q1.2 22.8 1.2 20 Z" stroke="#CED0D6" stroke-width="2.2" fill="#43454A" stroke-linecap="round" stroke-linejoin="round" /><circle cx="10" cy="14.5" r="3.2" stroke="#CED0D6" stroke-width="2" fill="none"/></svg>
<span class="t" style="left:300.00px;top:945.19px;font-size:26px;color:#DFE1E5;letter-spacing:0.293px;">com</span>
<svg class="r" style="left:264.5px;top:998.5px;" width="19.5" height="12.8" viewBox="0 0 19.5 12.8" fill="none"><path d="M2 2 L9.75 10.8 L17.5 2" stroke="#9DA0A8" stroke-width="2.2" fill="none" stroke-linecap="round" stroke-linejoin="round" /></svg>
<svg class="r" style="left:302px;top:991.5px;" width="28" height="24" viewBox="0 0 28 24" fill="none"><path d="M1.2 4 Q1.2 1.2 4 1.2 L10 1.2 L14.5 6 L24 6 Q26.8 6 26.8 8.8 L26.8 20 Q26.8 22.8 24 22.8 L4 22.8 Q1.2 22.8 1.2 20 Z" stroke="#CED0D6" stroke-width="2.2" fill="#43454A" stroke-linecap="round" stroke-linejoin="round" /><circle cx="10" cy="14.5" r="3.2" stroke="#CED0D6" stroke-width="2" fill="none"/></svg>
<span class="t" style="left:338.00px;top:993.19px;font-size:26px;color:#DFE1E5;letter-spacing:0.480px;">primeton</span>
<svg class="r" style="left:302.5px;top:1046.5px;" width="19.5" height="12.8" viewBox="0 0 19.5 12.8" fill="none"><path d="M2 2 L9.75 10.8 L17.5 2" stroke="#9DA0A8" stroke-width="2.2" fill="none" stroke-linecap="round" stroke-linejoin="round" /></svg>
<svg class="r" style="left:340px;top:1039.5px;" width="28" height="24" viewBox="0 0 28 24" fill="none"><path d="M1.2 4 Q1.2 1.2 4 1.2 L10 1.2 L14.5 6 L24 6 Q26.8 6 26.8 8.8 L26.8 20 Q26.8 22.8 24 22.8 L4 22.8 Q1.2 22.8 1.2 20 Z" stroke="#CED0D6" stroke-width="2.2" fill="#43454A" stroke-linecap="round" stroke-linejoin="round" /><circle cx="10" cy="14.5" r="3.2" stroke="#CED0D6" stroke-width="2" fill="none"/></svg>
<span class="t" style="left:376.00px;top:1041.19px;font-size:26px;color:#DFE1E5;letter-spacing:-0.640px;">esb</span>
<svg class="r" style="left:340.5px;top:1094.5px;" width="19.5" height="12.8" viewBox="0 0 19.5 12.8" fill="none"><path d="M2 2 L9.75 10.8 L17.5 2" stroke="#9DA0A8" stroke-width="2.2" fill="none" stroke-linecap="round" stroke-linejoin="round" /></svg>
<svg class="r" style="left:378px;top:1087.5px;" width="28" height="24" viewBox="0 0 28 24" fill="none"><path d="M1.2 4 Q1.2 1.2 4 1.2 L10 1.2 L14.5 6 L24 6 Q26.8 6 26.8 8.8 L26.8 20 Q26.8 22.8 24 22.8 L4 22.8 Q1.2 22.8 1.2 20 Z" stroke="#CED0D6" stroke-width="2.2" fill="#43454A" stroke-linecap="round" stroke-linejoin="round" /><circle cx="10" cy="14.5" r="3.2" stroke="#CED0D6" stroke-width="2" fill="none"/></svg>
<span class="t" style="left:414.00px;top:1089.19px;font-size:26px;color:#DFE1E5;letter-spacing:0.422px;">governor</span>
<svg class="r" style="left:378.5px;top:1142.5px;" width="19.5" height="12.8" viewBox="0 0 19.5 12.8" fill="none"><path d="M2 2 L9.75 10.8 L17.5 2" stroke="#9DA0A8" stroke-width="2.2" fill="none" stroke-linecap="round" stroke-linejoin="round" /></svg>
<svg class="r" style="left:416px;top:1135.5px;" width="28" height="24" viewBox="0 0 28 24" fill="none"><path d="M1.2 4 Q1.2 1.2 4 1.2 L10 1.2 L14.5 6 L24 6 Q26.8 6 26.8 8.8 L26.8 20 Q26.8 22.8 24 22.8 L4 22.8 Q1.2 22.8 1.2 20 Z" stroke="#CED0D6" stroke-width="2.2" fill="#43454A" stroke-linecap="round" stroke-linejoin="round" /><circle cx="10" cy="14.5" r="3.2" stroke="#CED0D6" stroke-width="2" fill="none"/></svg>
<span class="t" style="left:452.00px;top:1137.19px;font-size:26px;color:#DFE1E5;letter-spacing:0.079px;">esbafcboot</span>
<svg class="r" style="left:420px;top:1188px;" width="11.6" height="18" viewBox="0 0 11.6 18" fill="none"><path d="M2 2 L9.6 9.0 L2 16" stroke="#9DA0A8" stroke-width="2.2" fill="none" stroke-linecap="round" stroke-linejoin="round" /></svg>
<svg class="r" style="left:454px;top:1183.5px;" width="28" height="24" viewBox="0 0 28 24" fill="none"><path d="M1.2 4 Q1.2 1.2 4 1.2 L10 1.2 L14.5 6 L24 6 Q26.8 6 26.8 8.8 L26.8 20 Q26.8 22.8 24 22.8 L4 22.8 Q1.2 22.8 1.2 20 Z" stroke="#CED0D6" stroke-width="2.2" fill="#43454A" stroke-linecap="round" stroke-linejoin="round" /><circle cx="10" cy="14.5" r="3.2" stroke="#CED0D6" stroke-width="2" fill="none"/></svg>
<span class="t" style="left:490.00px;top:1185.19px;font-size:26px;color:#DFE1E5;letter-spacing:0.270px;">config</span>
<svg class="r" style="left:420px;top:1236px;" width="11.6" height="18" viewBox="0 0 11.6 18" fill="none"><path d="M2 2 L9.6 9.0 L2 16" stroke="#9DA0A8" stroke-width="2.2" fill="none" stroke-linecap="round" stroke-linejoin="round" /></svg>
<svg class="r" style="left:453.7px;top:1225.9px;" width="34" height="36" viewBox="0 -2 34 36" fill="none"><circle cx="14.1" cy="14.9" r="13.1" stroke="#548AF7" stroke-width="2.1" fill="#25324D"/><path d="M17.57 10.76 A5.4 5.4 0 1 0 17.57 19.04" stroke="#548AF7" stroke-width="2.1" fill="none" stroke-linecap="round" stroke-linejoin="round" /><circle cx="23" cy="24.7" r="9" fill="#43454A"/><path d="M17.5 0.5 L28.6 6.9 L17.5 13.3 Z" fill="#43454A" stroke="#43454A" stroke-width="5" stroke-linejoin="round"/><path d="M17.5 0.5 L28.6 6.9 L17.5 13.3 Z" fill="#253627" stroke="#57965C" stroke-width="2" stroke-linejoin="round"/><path d="M20.3 19.3 A6.1 6.1 0 1 0 25.7 19.3 M23 16.3 V21.8" stroke="#CED0D6" stroke-width="2.3" fill="none" stroke-linecap="round" stroke-linejoin="round" /></svg>
<svg class="r" style="left:494px;top:1233.3px;" width="18" height="20" viewBox="0 0 18 20" fill="none"><rect x="1.2" y="8.5" width="11.5" height="9" rx="1.5" stroke="#57965C" stroke-width="2" fill="#253627"/><path d="M9 8 V6.3 Q9 3.2 12.3 3.2 Q15.6 3.2 15.6 6.3 V8.6" stroke="#57965C" stroke-width="2" fill="none" stroke-linecap="round" stroke-linejoin="round" /></svg>
<span class="t" style="left:522.00px;top:1233.19px;font-size:26px;color:#DFE1E5;letter-spacing:-0.018px;">Application</span>
<svg class="r" style="left:230px;top:1284px;" width="11.6" height="18" viewBox="0 0 11.6 18" fill="none"><path d="M2 2 L9.6 9.0 L2 16" stroke="#9DA0A8" stroke-width="2.2" fill="none" stroke-linecap="round" stroke-linejoin="round" /></svg>
<svg class="r" style="left:264px;top:1279.5px;" width="28" height="24" viewBox="0 0 28 24" fill="none"><path d="M1.2 4 Q1.2 1.2 4 1.2 L10 1.2 L14.5 6 L24 6 Q26.8 6 26.8 8.8 L26.8 20 Q26.8 22.8 24 22.8 L4 22.8 Q1.2 22.8 1.2 20 Z" stroke="#CED0D6" stroke-width="2.2" fill="#43454A" stroke-linecap="round" stroke-linejoin="round" /></svg>
<span class="t" style="left:300.00px;top:1281.19px;font-size:26px;color:#DFE1E5;letter-spacing:-0.480px;">META-INF</span>
<svg class="r" style="left:266px;top:1329px;" width="26" height="22" viewBox="0 0 26 22" fill="none"><path d="M1 2 H23 M1 8 H17 M1 14 H23 M1 20 H15" stroke="#CED0D6" stroke-width="2" fill="none" stroke-linecap="round" stroke-linejoin="round" /></svg>
<span class="t" style="left:300.00px;top:1329.19px;font-size:26px;color:#DFE1E5;letter-spacing:-0.786px;">.eos</span>
<svg class="r" style="left:192px;top:1380px;" width="11.6" height="18" viewBox="0 0 11.6 18" fill="none"><path d="M2 2 L9.6 9.0 L2 16" stroke="#9DA0A8" stroke-width="2.2" fill="none" stroke-linecap="round" stroke-linejoin="round" /></svg>
<svg class="r" style="left:226px;top:1375.5px;" width="28" height="24" viewBox="0 0 28 24" fill="none"><path d="M1.2 4 Q1.2 1.2 4 1.2 L10 1.2 L14.5 6 L24 6 Q26.8 6 26.8 8.8 L26.8 20 Q26.8 22.8 24 22.8 L4 22.8 Q1.2 22.8 1.2 20 Z" stroke="#E08855" stroke-width="2.2" fill="#45322B" stroke-linecap="round" stroke-linejoin="round" /></svg>
<span class="t" style="left:262.00px;top:1377.19px;font-size:26px;color:#E0955B;letter-spacing:0.419px;">target</span>
<span class="t" style="left:224.50px;top:1416.37px;font-size:35px;color:#548AF7;font-style:italic;letter-spacing:1.843px;-webkit-text-stroke:0.9px #548AF7;">m</span>
<span class="t" style="left:262.00px;top:1425.19px;font-size:26px;color:#DFE1E5;letter-spacing:-0.034px;">pom.xml</span>
<svg class="r" style="left:154px;top:1476px;" width="11.6" height="18" viewBox="0 0 11.6 18" fill="none"><path d="M2 2 L9.6 9.0 L2 16" stroke="#9DA0A8" stroke-width="2.2" fill="none" stroke-linecap="round" stroke-linejoin="round" /></svg>
<svg class="r" style="left:188px;top:1471.5px;" width="32" height="30" viewBox="0 0 32 30" fill="none"><path d="M1.2 4 Q1.2 1.2 4 1.2 L10 1.2 L14.5 6 L24 6 Q26.8 6 26.8 8.8 L26.8 12 L14 12 L14 22.8 L4 22.8 Q1.2 22.8 1.2 20 Z" stroke="#CED0D6" stroke-width="2.2" fill="#43454A" stroke-linecap="round" stroke-linejoin="round" /><rect x="13.5" y="11.2" width="18" height="18" fill="#2B2D30"/><rect x="16.6" y="14.3" width="12.6" height="12.6" rx="3.2" stroke="#548AF7" stroke-width="2.2" fill="#25324D"/></svg>
<span class="t" style="left:224.00px;top:1473.19px;font-size:26px;color:#DFE1E5;font-weight:bold;letter-spacing:-0.113px;">com.primeton.esb.governor.logintest</span>
<svg class="r" style="left:154px;top:1524px;" width="11.6" height="18" viewBox="0 0 11.6 18" fill="none"><path d="M2 2 L9.6 9.0 L2 16" stroke="#9DA0A8" stroke-width="2.2" fill="none" stroke-linecap="round" stroke-linejoin="round" /></svg>
<svg class="r" style="left:188px;top:1519.5px;" width="32" height="30" viewBox="0 0 32 30" fill="none"><path d="M1.2 4 Q1.2 1.2 4 1.2 L10 1.2 L14.5 6 L24 6 Q26.8 6 26.8 8.8 L26.8 12 L14 12 L14 22.8 L4 22.8 Q1.2 22.8 1.2 20 Z" stroke="#CED0D6" stroke-width="2.2" fill="#43454A" stroke-linecap="round" stroke-linejoin="round" /><rect x="13.5" y="11.2" width="18" height="18" fill="#2B2D30"/><rect x="16.6" y="14.3" width="12.6" height="12.6" rx="3.2" stroke="#548AF7" stroke-width="2.2" fill="#25324D"/></svg>
<span class="t" style="left:224.00px;top:1521.19px;font-size:26px;color:#DFE1E5;font-weight:bold;letter-spacing:-0.103px;">com.primeton.esb.governor.model</span>
<svg class="r" style="left:154px;top:1572px;" width="11.6" height="18" viewBox="0 0 11.6 18" fill="none"><path d="M2 2 L9.6 9.0 L2 16" stroke="#9DA0A8" stroke-width="2.2" fill="none" stroke-linecap="round" stroke-linejoin="round" /></svg>
<svg class="r" style="left:188px;top:1567.5px;" width="32" height="30" viewBox="0 0 32 30" fill="none"><path d="M1.2 4 Q1.2 1.2 4 1.2 L10 1.2 L14.5 6 L24 6 Q26.8 6 26.8 8.8 L26.8 12 L14 12 L14 22.8 L4 22.8 Q1.2 22.8 1.2 20 Z" stroke="#CED0D6" stroke-width="2.2" fill="#43454A" stroke-linecap="round" stroke-linejoin="round" /><rect x="13.5" y="11.2" width="18" height="18" fill="#2B2D30"/><rect x="16.6" y="14.3" width="12.6" height="12.6" rx="3.2" stroke="#548AF7" stroke-width="2.2" fill="#25324D"/></svg>
<span class="t" style="left:224.00px;top:1569.19px;font-size:26px;color:#DFE1E5;font-weight:bold;letter-spacing:-0.042px;">com.primeton.esb.governor.monitor</span>
<svg class="r" style="left:154px;top:1620px;" width="11.6" height="18" viewBox="0 0 11.6 18" fill="none"><path d="M2 2 L9.6 9.0 L2 16" stroke="#9DA0A8" stroke-width="2.2" fill="none" stroke-linecap="round" stroke-linejoin="round" /></svg>
<svg class="r" style="left:188px;top:1615.5px;" width="32" height="30" viewBox="0 0 32 30" fill="none"><path d="M1.2 4 Q1.2 1.2 4 1.2 L10 1.2 L14.5 6 L24 6 Q26.8 6 26.8 8.8 L26.8 12 L14 12 L14 22.8 L4 22.8 Q1.2 22.8 1.2 20 Z" stroke="#CED0D6" stroke-width="2.2" fill="#43454A" stroke-linecap="round" stroke-linejoin="round" /><rect x="13.5" y="11.2" width="18" height="18" fill="#2B2D30"/><rect x="16.6" y="14.3" width="12.6" height="12.6" rx="3.2" stroke="#548AF7" stroke-width="2.2" fill="#25324D"/></svg>
<span class="t" style="left:224.00px;top:1617.19px;font-size:26px;color:#DFE1E5;font-weight:bold;letter-spacing:-0.301px;">com.primeton.esb.governor.passageway</span>
<div class="r" style="left:400px;top:1226px;width:382px;height:50px;background:transparent;border:8px solid #F25252;border-radius:6px;box-sizing:border-box;"></div>
<div class="r" style="left:778px;top:162px;width:2022px;height:2px;background:#393B40;"></div>
<span class="t" style="left:782.00px;top:109.99px;font-size:26px;color:#DFE1E5;letter-spacing:-0.984px;">.java</span>
<div class="r" style="left:778px;top:82px;width:10px;height:80px;background:#1E1F22;background:linear-gradient(90deg,#1E1F22 0%,rgba(30,31,34,0) 100%);"></div>
<svg class="r" style="left:924px;top:105px;" width="34" height="36" viewBox="0 -2 34 36" fill="none"><circle cx="14.1" cy="14.9" r="13.1" stroke="#548AF7" stroke-width="2.1" fill="#25324D"/><path d="M17.57 10.76 A5.4 5.4 0 1 0 17.57 19.04" stroke="#548AF7" stroke-width="2.1" fill="none" stroke-linecap="round" stroke-linejoin="round" /><circle cx="23" cy="24.7" r="9" fill="#1E1F22"/><path d="M17.5 0.5 L28.6 6.9 L17.5 13.3 Z" fill="#1E1F22" stroke="#1E1F22" stroke-width="5" stroke-linejoin="round"/><path d="M17.5 0.5 L28.6 6.9 L17.5 13.3 Z" fill="#253627" stroke="#57965C" stroke-width="2" stroke-linejoin="round"/><path d="M20.3 19.3 A6.1 6.1 0 1 0 25.7 19.3 M23 16.3 V21.8" stroke="#CED0D6" stroke-width="2.3" fill="none" stroke-linecap="round" stroke-linejoin="round" /></svg>
<span class="t" style="left:965.00px;top:109.99px;font-size:26px;color:#DFE1E5;letter-spacing:-0.195px;">Application.java</span>
<svg class="r" style="left:1167px;top:113px;" width="18" height="18" viewBox="0 0 18 18" fill="none"><path d="M2 2 L16 16 M16 2 L2 16" stroke="#868A91" stroke-width="2" fill="none" stroke-linecap="round" stroke-linejoin="round" /></svg>
<div class="r" style="left:898px;top:157px;width:310px;height:7px;background:#3574F0;border-radius:4px;"></div>
<svg class="r" style="left:1232px;top:106px;" width="28" height="32" viewBox="0 0 28 32" fill="none"><path d="M14.00 2.70 L14.70 2.72 L15.39 2.77 L16.08 2.86 L16.65 3.52 L17.00 4.80 L17.23 6.07 L17.55 6.76 L18.03 6.96 L18.49 7.18 L18.95 7.43 L19.39 7.70 L19.82 7.99 L20.23 8.31 L20.99 8.24 L22.20 7.80 L23.48 7.46 L24.34 7.63 L24.76 8.18 L25.15 8.76 L25.52 9.35 L25.85 9.96 L26.15 10.59 L26.42 11.23 L26.13 12.06 L25.20 13.00 L24.22 13.83 L23.78 14.45 L23.85 14.97 L23.89 15.48 L23.90 16.00 L23.89 16.52 L23.85 17.03 L23.78 17.55 L24.22 18.17 L25.20 19.00 L26.13 19.94 L26.42 20.77 L26.15 21.41 L25.85 22.04 L25.52 22.65 L25.15 23.24 L24.76 23.82 L24.34 24.37 L23.48 24.54 L22.20 24.20 L20.99 23.76 L20.23 23.69 L19.82 24.01 L19.39 24.30 L18.95 24.57 L18.49 24.82 L18.03 25.04 L17.55 25.24 L17.23 25.93 L17.00 27.20 L16.65 28.48 L16.08 29.14 L15.39 29.23 L14.70 29.28 L14.00 29.30 L13.30 29.28 L12.61 29.23 L11.92 29.14 L11.35 28.48 L11.00 27.20 L10.77 25.93 L10.45 25.24 L9.97 25.04 L9.51 24.82 L9.05 24.57 L8.61 24.30 L8.18 24.01 L7.77 23.69 L7.01 23.76 L5.80 24.20 L4.52 24.54 L3.66 24.37 L3.24 23.82 L2.85 23.24 L2.48 22.65 L2.15 22.04 L1.85 21.41 L1.58 20.77 L1.87 19.94 L2.80 19.00 L3.78 18.17 L4.22 17.55 L4.15 17.03 L4.11 16.52 L4.10 16.00 L4.11 15.48 L4.15 14.97 L4.22 14.45 L3.78 13.83 L2.80 13.00 L1.87 12.06 L1.58 11.23 L1.85 10.59 L2.15 9.96 L2.48 9.35 L2.85 8.76 L3.24 8.18 L3.66 7.63 L4.52 7.46 L5.80 7.80 L7.01 8.24 L7.77 8.31 L8.18 7.99 L8.61 7.70 L9.05 7.43 L9.51 7.18 L9.97 6.96 L10.45 6.76 L10.77 6.07 L11.00 4.80 L11.35 3.52 L11.92 2.86 L12.61 2.77 L13.30 2.72 Z" stroke="#9DA0A8" stroke-width="2.1" fill="none" stroke-linecap="round" stroke-linejoin="round" /><circle cx="14" cy="16" r="4.9" stroke="#9DA0A8" stroke-width="2.1" fill="none"/></svg>
<span class="t" style="left:1272.00px;top:109.99px;font-size:26px;color:#5C9FEE;letter-spacing:0.010px;">application-esb.properties</span>
<svg class="r" style="left:1656px;top:106px;" width="28" height="32" viewBox="0 0 28 32" fill="none"><path d="M14.00 2.70 L14.70 2.72 L15.39 2.77 L16.08 2.86 L16.65 3.52 L17.00 4.80 L17.23 6.07 L17.55 6.76 L18.03 6.96 L18.49 7.18 L18.95 7.43 L19.39 7.70 L19.82 7.99 L20.23 8.31 L20.99 8.24 L22.20 7.80 L23.48 7.46 L24.34 7.63 L24.76 8.18 L25.15 8.76 L25.52 9.35 L25.85 9.96 L26.15 10.59 L26.42 11.23 L26.13 12.06 L25.20 13.00 L24.22 13.83 L23.78 14.45 L23.85 14.97 L23.89 15.48 L23.90 16.00 L23.89 16.52 L23.85 17.03 L23.78 17.55 L24.22 18.17 L25.20 19.00 L26.13 19.94 L26.42 20.77 L26.15 21.41 L25.85 22.04 L25.52 22.65 L25.15 23.24 L24.76 23.82 L24.34 24.37 L23.48 24.54 L22.20 24.20 L20.99 23.76 L20.23 23.69 L19.82 24.01 L19.39 24.30 L18.95 24.57 L18.49 24.82 L18.03 25.04 L17.55 25.24 L17.23 25.93 L17.00 27.20 L16.65 28.48 L16.08 29.14 L15.39 29.23 L14.70 29.28 L14.00 29.30 L13.30 29.28 L12.61 29.23 L11.92 29.14 L11.35 28.48 L11.00 27.20 L10.77 25.93 L10.45 25.24 L9.97 25.04 L9.51 24.82 L9.05 24.57 L8.61 24.30 L8.18 24.01 L7.77 23.69 L7.01 23.76 L5.80 24.20 L4.52 24.54 L3.66 24.37 L3.24 23.82 L2.85 23.24 L2.48 22.65 L2.15 22.04 L1.85 21.41 L1.58 20.77 L1.87 19.94 L2.80 19.00 L3.78 18.17 L4.22 17.55 L4.15 17.03 L4.11 16.52 L4.10 16.00 L4.11 15.48 L4.15 14.97 L4.22 14.45 L3.78 13.83 L2.80 13.00 L1.87 12.06 L1.58 11.23 L1.85 10.59 L2.15 9.96 L2.48 9.35 L2.85 8.76 L3.24 8.18 L3.66 7.63 L4.52 7.46 L5.80 7.80 L7.01 8.24 L7.77 8.31 L8.18 7.99 L8.61 7.70 L9.05 7.43 L9.51 7.18 L9.97 6.96 L10.45 6.76 L10.77 6.07 L11.00 4.80 L11.35 3.52 L11.92 2.86 L12.61 2.77 L13.30 2.72 Z" stroke="#9DA0A8" stroke-width="2.1" fill="none" stroke-linecap="round" stroke-linejoin="round" /><circle cx="14" cy="16" r="4.9" stroke="#9DA0A8" stroke-width="2.1" fill="none"/></svg>
<span class="t" style="left:1696.00px;top:109.99px;font-size:26px;color:#5C9FEE;letter-spacing:-0.007px;">application.properties</span>
<svg class="r" style="left:2028px;top:111px;" width="32" height="24" viewBox="0 0 32 24" fill="none"><path d="M9 4 L2 12 L9 20 M23 4 L30 12 L23 20 M19 2 L13 22" stroke="#C77D55" stroke-width="2.3" fill="none" stroke-linecap="round" stroke-linejoin="round" /></svg>
<span class="t" style="left:2071.00px;top:109.99px;font-size:26px;color:#5C9FEE;letter-spacing:-0.085px;">user-config.xml</span>
<svg class="r" style="left:2332px;top:106px;" width="28" height="32" viewBox="0 0 28 32" fill="none"><path d="M14.00 2.70 L14.70 2.72 L15.39 2.77 L16.08 2.86 L16.65 3.52 L17.00 4.80 L17.23 6.07 L17.55 6.76 L18.03 6.96 L18.49 7.18 L18.95 7.43 L19.39 7.70 L19.82 7.99 L20.23 8.31 L20.99 8.24 L22.20 7.80 L23.48 7.46 L24.34 7.63 L24.76 8.18 L25.15 8.76 L25.52 9.35 L25.85 9.96 L26.15 10.59 L26.42 11.23 L26.13 12.06 L25.20 13.00 L24.22 13.83 L23.78 14.45 L23.85 14.97 L23.89 15.48 L23.90 16.00 L23.89 16.52 L23.85 17.03 L23.78 17.55 L24.22 18.17 L25.20 19.00 L26.13 19.94 L26.42 20.77 L26.15 21.41 L25.85 22.04 L25.52 22.65 L25.15 23.24 L24.76 23.82 L24.34 24.37 L23.48 24.54 L22.20 24.20 L20.99 23.76 L20.23 23.69 L19.82 24.01 L19.39 24.30 L18.95 24.57 L18.49 24.82 L18.03 25.04 L17.55 25.24 L17.23 25.93 L17.00 27.20 L16.65 28.48 L16.08 29.14 L15.39 29.23 L14.70 29.28 L14.00 29.30 L13.30 29.28 L12.61 29.23 L11.92 29.14 L11.35 28.48 L11.00 27.20 L10.77 25.93 L10.45 25.24 L9.97 25.04 L9.51 24.82 L9.05 24.57 L8.61 24.30 L8.18 24.01 L7.77 23.69 L7.01 23.76 L5.80 24.20 L4.52 24.54 L3.66 24.37 L3.24 23.82 L2.85 23.24 L2.48 22.65 L2.15 22.04 L1.85 21.41 L1.58 20.77 L1.87 19.94 L2.80 19.00 L3.78 18.17 L4.22 17.55 L4.15 17.03 L4.11 16.52 L4.10 16.00 L4.11 15.48 L4.15 14.97 L4.22 14.45 L3.78 13.83 L2.80 13.00 L1.87 12.06 L1.58 11.23 L1.85 10.59 L2.15 9.96 L2.48 9.35 L2.85 8.76 L3.24 8.18 L3.66 7.63 L4.52 7.46 L5.80 7.80 L7.01 8.24 L7.77 8.31 L8.18 7.99 L8.61 7.70 L9.05 7.43 L9.51 7.18 L9.97 6.96 L10.45 6.76 L10.77 6.07 L11.00 4.80 L11.35 3.52 L11.92 2.86 L12.61 2.77 L13.30 2.72 Z" stroke="#9DA0A8" stroke-width="2.1" fill="none" stroke-linecap="round" stroke-linejoin="round" /><circle cx="14" cy="16" r="4.9" stroke="#9DA0A8" stroke-width="2.1" fill="none"/></svg>
<span class="t" style="left:2372.00px;top:109.99px;font-size:26px;color:#DFE1E5;letter-spacing:0.019px;">application-afc.properties</span>
<div class="r" style="left:2640px;top:90px;width:30px;height:70px;background:#1E1F22;background:linear-gradient(90deg,rgba(30,31,34,0) 0%,rgba(30,31,34,.75) 100%);"></div>
<svg class="r" style="left:2699.5px;top:116.5px;" width="22.5" height="14.5" viewBox="0 0 22.5 14.5" fill="none"><path d="M2 2 L11.25 12.5 L20.5 2" stroke="#CED0D6" stroke-width="2.2" fill="none" stroke-linecap="round" stroke-linejoin="round" /></svg>
<svg class="r" style="left:2758px;top:107.6px;" width="8" height="29" viewBox="0 0 8 29" fill="none"><circle cx="4" cy="4.0" r="2.35" fill="#CED0D6"/><circle cx="4" cy="14.4" r="2.35" fill="#CED0D6"/><circle cx="4" cy="24.8" r="2.35" fill="#CED0D6"/></svg>
<svg class="r" style="left:2810px;top:90px;" width="70" height="70" viewBox="0 0 70 70" fill="none"><path d="M35.4 15.6 C27 15.6 21.5 19.6 21.5 26 L21.5 32.5 L16.9 41 Q16.3 42.5 18 42.5 L46 42.5 Q47.8 42.5 47.2 41 L42.5 32.5 L42.5 29.2" stroke="#CED0D6" stroke-width="2.9" fill="none" stroke-linecap="round" stroke-linejoin="round" /><path d="M27.6 46.2 H36.5 Q35.2 50.4 32 50.4 Q28.9 50.4 27.6 46.2 Z" fill="#CED0D6"/></svg>
<div class="r" style="left:2847.9px;top:102px;width:14.2px;height:14.2px;background:#DB5C5C;border-radius:50%;"></div>
<svg class="r" style="left:2822px;top:196px;" width="36" height="24" viewBox="0 0 36 24" fill="none"><path d="M11 19.6 Q20 22.6 30 19.6" stroke="#CED0D6" stroke-width="2.6" fill="none" stroke-linecap="round" stroke-linejoin="round" /></svg>
<svg class="r" style="left:2810px;top:250px;" width="70" height="70" viewBox="0 0 70 70" fill="none"><ellipse cx="32.05" cy="20.8" rx="14.65" ry="5.6" stroke="#CED0D6" stroke-width="2.9" fill="none"/><path d="M17.4 20.8 V43.3 A14.65 5.6 0 0 0 46.7 43.3 V20.8 M17.4 28.3 A14.65 5.6 0 0 0 46.7 28.3 M17.4 35.8 A14.65 5.6 0 0 0 46.7 35.8" stroke="#CED0D6" stroke-width="2.9" fill="none" stroke-linecap="round" stroke-linejoin="round" /></svg>
<svg class="r" style="left:2822px;top:342px;" width="40" height="40" viewBox="0 0 40 40" fill="none"><path d="M13.85 -0.10 L21.13 -0.10 L23.56 4.55 L34.48 4.55 L37.10 9.40 L34.27 15.07 L40.48 24.72 L36.84 31.03 L31.60 30.81 L26.14 40.27 L20.63 40.11 L17.13 34.82 L5.67 35.38 L2.03 29.07 L4.84 24.64 L-0.62 15.18 L2.27 10.49 L8.60 10.11 Z" fill="#CCCCCC" stroke="#CCCCCC" stroke-width="0.8" stroke-linejoin="round"/><path d="M14.18 1.30 L16.77 5.60 L14.46 10.20 L35.70 10.20 L33.50 14.70 L12.64 14.70 L9.90 9.50 Z" fill="#2B2D30"/><path d="M39.10 24.31 L34.09 24.40 L31.26 20.10 L20.64 38.50 L17.84 34.34 L28.27 16.28 L34.14 16.50 Z" fill="#2B2D30"/><path d="M6.72 34.39 L9.14 30.00 L14.28 29.70 L3.66 11.30 L8.66 10.96 L19.09 29.02 L15.96 34.00 Z" fill="#2B2D30"/></svg>
<span class="t" style="left:2823.00px;top:415.21px;font-size:47px;color:#CED0D6;font-style:italic;letter-spacing:-1.153px;-webkit-text-stroke:0.8px #CED0D6;">m</span>
<div class="r" style="left:0;top:0;width:2800px;height:1716px;overflow:hidden">
<div class="r" style="left:778px;top:802px;width:2022px;height:58px;background:#26282E;"></div>
<div class="r" style="left:972px;top:802px;width:320px;height:58px;background:#373B39;"></div>
<div class="r" style="left:946px;top:164px;width:2px;height:1481px;background:#313438;"></div>
<span class="t" style="left:834.10px;top:179.56px;font-size:34.5px;color:#4B5059;font-family:'Liberation Mono',monospace;letter-spacing:-2.103px;">1</span>
<span class="t" style="left:834.10px;top:237.56px;font-size:34.5px;color:#4B5059;font-family:'Liberation Mono',monospace;letter-spacing:-2.103px;">2</span>
<span class="t" style="left:834.10px;top:295.56px;font-size:34.5px;color:#4B5059;font-family:'Liberation Mono',monospace;letter-spacing:-2.103px;">3</span>
<span class="t" style="left:815.50px;top:353.56px;font-size:34.5px;color:#4B5059;font-family:'Liberation Mono',monospace;letter-spacing:-2.103px;">15</span>
<span class="t" style="left:815.50px;top:411.56px;font-size:34.5px;color:#4B5059;font-family:'Liberation Mono',monospace;letter-spacing:-2.103px;">16</span>
<span class="t" style="left:815.50px;top:469.56px;font-size:34.5px;color:#4B5059;font-family:'Liberation Mono',monospace;letter-spacing:-2.103px;">17</span>
<span class="t" style="left:815.50px;top:527.56px;font-size:34.5px;color:#4B5059;font-family:'Liberation Mono',monospace;letter-spacing:-2.103px;">18</span>
<span class="t" style="left:815.50px;top:585.56px;font-size:34.5px;color:#4B5059;font-family:'Liberation Mono',monospace;letter-spacing:-2.103px;">19</span>
<span class="t" style="left:815.50px;top:643.56px;font-size:34.5px;color:#4B5059;font-family:'Liberation Mono',monospace;letter-spacing:-2.103px;">20</span>
<span class="t" style="left:815.50px;top:701.56px;font-size:34.5px;color:#4B5059;font-family:'Liberation Mono',monospace;letter-spacing:-2.103px;">21</span>
<span class="t" style="left:815.50px;top:759.56px;font-size:34.5px;color:#4B5059;font-family:'Liberation Mono',monospace;letter-spacing:-2.103px;">22</span>
<span class="t" style="left:815.50px;top:817.56px;font-size:34.5px;color:#A1A3AB;font-family:'Liberation Mono',monospace;letter-spacing:-2.103px;">23</span>
<span class="t" style="left:815.50px;top:875.56px;font-size:34.5px;color:#4B5059;font-family:'Liberation Mono',monospace;letter-spacing:-2.103px;">24</span>
<span class="t" style="left:815.50px;top:971.56px;font-size:34.5px;color:#4B5059;font-family:'Liberation Mono',monospace;letter-spacing:-2.103px;">25</span>
<span class="t" style="left:815.50px;top:1029.56px;font-size:34.5px;color:#4B5059;font-family:'Liberation Mono',monospace;letter-spacing:-2.103px;">26</span>
<span class="t" style="left:815.50px;top:1125.56px;font-size:34.5px;color:#4B5059;font-family:'Liberation Mono',monospace;letter-spacing:-2.103px;">29</span>
<span class="t" style="left:815.50px;top:1183.56px;font-size:34.5px;color:#4B5059;font-family:'Liberation Mono',monospace;letter-spacing:-2.103px;">32</span>
<span class="t" style="left:815.50px;top:1241.56px;font-size:34.5px;color:#4B5059;font-family:'Liberation Mono',monospace;letter-spacing:-2.103px;">33</span>
<span class="t" style="left:952.00px;top:179.56px;font-size:34.5px;color:#CF8E6D;font-family:'Liberation Mono',monospace;letter-spacing:-0.703px;-webkit-text-stroke:0.35px #CF8E6D;">package</span>
<span class="t" style="left:1092.00px;top:179.56px;font-size:34.5px;color:#BCBEC4;font-family:'Liberation Mono',monospace;letter-spacing:-0.703px;-webkit-text-stroke:0.35px #BCBEC4;"> com.primeton.esb.governor.esbafcboot;</span>
<span class="t" style="left:952.00px;top:295.56px;font-size:34.5px;color:#CF8E6D;font-family:'Liberation Mono',monospace;letter-spacing:-0.703px;-webkit-text-stroke:0.35px #CF8E6D;">import</span>
<div class="r" style="left:1091px;top:280px;width:61px;height:57px;background:#2B2D30;"></div>
<div class="r" style="left:1094px;top:283px;width:55px;height:51px;background:#393B40;"></div>
<span class="t" style="left:1092.00px;top:295.56px;font-size:34.5px;color:#868A91;font-family:'Liberation Mono',monospace;letter-spacing:-0.703px;">...</span>
<span class="t" style="left:952.00px;top:411.56px;font-size:34.5px;color:#B3AE60;font-family:'Liberation Mono',monospace;letter-spacing:-0.703px;-webkit-text-stroke:0.35px #B3AE60;">@SpringBootApplication</span>
<span class="t" style="left:952.00px;top:469.56px;font-size:34.5px;color:#B3AE60;font-family:'Liberation Mono',monospace;letter-spacing:-0.703px;-webkit-text-stroke:0.35px #B3AE60;">@EnableJpaRepositories</span>
<span class="t" style="left:1392.00px;top:469.56px;font-size:34.5px;color:#BCBEC4;font-family:'Liberation Mono',monospace;letter-spacing:-0.703px;-webkit-text-stroke:0.35px #BCBEC4;">(basePackages = {</span>
<span class="t" style="left:1732.00px;top:469.56px;font-size:34.5px;color:#6AAB73;font-family:'Liberation Mono',monospace;letter-spacing:-0.703px;-webkit-text-stroke:0.35px #6AAB73;">"com.primeton.esb"</span>
<span class="t" style="left:2092.00px;top:469.56px;font-size:34.5px;color:#BCBEC4;font-family:'Liberation Mono',monospace;letter-spacing:-0.703px;-webkit-text-stroke:0.35px #BCBEC4;">,</span>
<span class="t" style="left:2112.00px;top:469.56px;font-size:34.5px;color:#6AAB73;font-family:'Liberation Mono',monospace;letter-spacing:-0.703px;-webkit-text-stroke:0.35px #6AAB73;">"com.primeton.gocom"</span>
<span class="t" style="left:2512.00px;top:469.56px;font-size:34.5px;color:#BCBEC4;font-family:'Liberation Mono',monospace;letter-spacing:-0.703px;-webkit-text-stroke:0.35px #BCBEC4;">})</span>
<span class="t" style="left:952.00px;top:527.56px;font-size:34.5px;color:#B3AE60;font-family:'Liberation Mono',monospace;letter-spacing:-0.703px;-webkit-text-stroke:0.35px #B3AE60;">@EntityScan</span>
<span class="t" style="left:1172.00px;top:527.56px;font-size:34.5px;color:#BCBEC4;font-family:'Liberation Mono',monospace;letter-spacing:-0.703px;-webkit-text-stroke:0.35px #BCBEC4;">(basePackages = {</span>
<span class="t" style="left:1512.00px;top:527.56px;font-size:34.5px;color:#6AAB73;font-family:'Liberation Mono',monospace;letter-spacing:-0.703px;-webkit-text-stroke:0.35px #6AAB73;">"com.primeton.esb"</span>
<span class="t" style="left:1872.00px;top:527.56px;font-size:34.5px;color:#BCBEC4;font-family:'Liberation Mono',monospace;letter-spacing:-0.703px;-webkit-text-stroke:0.35px #BCBEC4;">,</span>
<span class="t" style="left:1892.00px;top:527.56px;font-size:34.5px;color:#6AAB73;font-family:'Liberation Mono',monospace;letter-spacing:-0.703px;-webkit-text-stroke:0.35px #6AAB73;">"com.primeton.gocom"</span>
<span class="t" style="left:2292.00px;top:527.56px;font-size:34.5px;color:#BCBEC4;font-family:'Liberation Mono',monospace;letter-spacing:-0.703px;-webkit-text-stroke:0.35px #BCBEC4;">})</span>
<span class="t" style="left:952.00px;top:585.56px;font-size:34.5px;color:#B3AE60;font-family:'Liberation Mono',monospace;letter-spacing:-0.703px;-webkit-text-stroke:0.35px #B3AE60;">@EnableFeignClients</span>
<span class="t" style="left:1332.00px;top:585.56px;font-size:34.5px;color:#BCBEC4;font-family:'Liberation Mono',monospace;letter-spacing:-0.703px;-webkit-text-stroke:0.35px #BCBEC4;">(basePackages = {</span>
<span class="t" style="left:1672.00px;top:585.56px;font-size:34.5px;color:#6AAB73;font-family:'Liberation Mono',monospace;letter-spacing:-0.703px;-webkit-text-stroke:0.35px #6AAB73;">"com.primeton.esb.governor.server.feignserver"</span>
<span class="t" style="left:2592.00px;top:585.56px;font-size:34.5px;color:#BCBEC4;font-family:'Liberation Mono',monospace;letter-spacing:-0.703px;-webkit-text-stroke:0.35px #BCBEC4;">,</span>
<span class="t" style="left:2612.00px;top:585.56px;font-size:34.5px;color:#6AAB73;font-family:'Liberation Mono',monospace;letter-spacing:-0.703px;-webkit-text-stroke:0.35px #6AAB73;">"com.primeton.esb.governor.xx"</span>
<span class="t" style="left:952.00px;top:643.56px;font-size:34.5px;color:#B3AE60;font-family:'Liberation Mono',monospace;letter-spacing:-0.703px;-webkit-text-stroke:0.35px #B3AE60;">@EnableDiscoveryClient</span>
<span class="t" style="left:952.00px;top:701.56px;font-size:34.5px;color:#B3AE60;font-family:'Liberation Mono',monospace;letter-spacing:-0.703px;-webkit-text-stroke:0.35px #B3AE60;">@ComponentScan</span>
<span class="t" style="left:1232.00px;top:701.56px;font-size:34.5px;color:#BCBEC4;font-family:'Liberation Mono',monospace;letter-spacing:-0.703px;-webkit-text-stroke:0.35px #BCBEC4;">(value = {</span>
<span class="t" style="left:1432.00px;top:701.56px;font-size:34.5px;color:#6AAB73;font-family:'Liberation Mono',monospace;letter-spacing:-0.703px;-webkit-text-stroke:0.35px #6AAB73;">"com.primeton.esb"</span>
<span class="t" style="left:1792.00px;top:701.56px;font-size:34.5px;color:#BCBEC4;font-family:'Liberation Mono',monospace;letter-spacing:-0.703px;-webkit-text-stroke:0.35px #BCBEC4;">,</span>
<span class="t" style="left:1812.00px;top:701.56px;font-size:34.5px;color:#6AAB73;font-family:'Liberation Mono',monospace;letter-spacing:-0.703px;-webkit-text-stroke:0.35px #6AAB73;">"com.primeton.eos"</span>
<span class="t" style="left:2172.00px;top:701.56px;font-size:34.5px;color:#BCBEC4;font-family:'Liberation Mono',monospace;letter-spacing:-0.703px;-webkit-text-stroke:0.35px #BCBEC4;">,</span>
<span class="t" style="left:2192.00px;top:701.56px;font-size:34.5px;color:#6AAB73;font-family:'Liberation Mono',monospace;letter-spacing:-0.703px;-webkit-text-stroke:0.35px #6AAB73;">"com.primeton.gocom"</span>
<span class="t" style="left:2592.00px;top:701.56px;font-size:34.5px;color:#BCBEC4;font-family:'Liberation Mono',monospace;letter-spacing:-0.703px;-webkit-text-stroke:0.35px #BCBEC4;">})</span>
<span class="t" style="left:952.00px;top:759.56px;font-size:34.5px;color:#B3AE60;font-family:'Liberation Mono',monospace;letter-spacing:-0.703px;-webkit-text-stroke:0.35px #B3AE60;">@EnableAsync</span>
<span class="t" style="left:952.00px;top:817.56px;font-size:34.5px;color:#B3AE60;font-family:'Liberation Mono',monospace;letter-spacing:-0.703px;-webkit-text-stroke:0.35px #B3AE60;">@EnableScheduling</span>
<span class="t" style="left:952.00px;top:875.56px;font-size:34.5px;color:#CF8E6D;font-family:'Liberation Mono',monospace;letter-spacing:-0.703px;-webkit-text-stroke:0.35px #CF8E6D;">public</span>
<span class="t" style="left:1072.00px;top:875.56px;font-size:34.5px;color:#BCBEC4;font-family:'Liberation Mono',monospace;letter-spacing:-0.703px;-webkit-text-stroke:0.35px #BCBEC4;"> </span>
<span class="t" style="left:1092.00px;top:875.56px;font-size:34.5px;color:#CF8E6D;font-family:'Liberation Mono',monospace;letter-spacing:-0.703px;-webkit-text-stroke:0.35px #CF8E6D;">class</span>
<span class="t" style="left:1192.00px;top:875.56px;font-size:34.5px;color:#BCBEC4;font-family:'Liberation Mono',monospace;letter-spacing:-0.703px;-webkit-text-stroke:0.35px #BCBEC4;"> Application {</span>
<span class="t" style="left:1032.00px;top:971.56px;font-size:34.5px;color:#B3AE60;font-family:'Liberation Mono',monospace;letter-spacing:-0.703px;-webkit-text-stroke:0.35px #B3AE60;">@Bean</span>
<span class="t" style="left:1032.00px;top:1029.56px;font-size:34.5px;color:#CF8E6D;font-family:'Liberation Mono',monospace;letter-spacing:-0.703px;-webkit-text-stroke:0.35px #CF8E6D;">public</span>
<span class="t" style="left:1152.00px;top:1029.56px;font-size:34.5px;color:#BCBEC4;font-family:'Liberation Mono',monospace;letter-spacing:-0.703px;-webkit-text-stroke:0.35px #BCBEC4;"> ApplicationPidFileWriter </span>
<span class="t" style="left:1672.00px;top:1029.56px;font-size:34.5px;color:#56A8F5;font-family:'Liberation Mono',monospace;letter-spacing:-0.703px;-webkit-text-stroke:0.35px #56A8F5;">applicationPidFileWriter</span>
<span class="t" style="left:2152.00px;top:1029.56px;font-size:34.5px;color:#BCBEC4;font-family:'Liberation Mono',monospace;letter-spacing:-0.703px;-webkit-text-stroke:0.35px #BCBEC4;">()</span>
<div class="r" style="left:2192px;top:1014px;width:60px;height:58px;background:#393B40;"></div>
<span class="t" style="left:2192.00px;top:1029.56px;font-size:34.5px;color:#868A91;font-family:'Liberation Mono',monospace;letter-spacing:-0.703px;"> { </span>
<span class="t" style="left:2252.00px;top:1029.56px;font-size:34.5px;color:#CF8E6D;font-family:'Liberation Mono',monospace;letter-spacing:-0.703px;-webkit-text-stroke:0.35px #CF8E6D;">return</span>
<span class="t" style="left:2372.00px;top:1029.56px;font-size:34.5px;color:#BCBEC4;font-family:'Liberation Mono',monospace;letter-spacing:-0.703px;-webkit-text-stroke:0.35px #BCBEC4;"> </span>
<span class="t" style="left:2392.00px;top:1029.56px;font-size:34.5px;color:#CF8E6D;font-family:'Liberation Mono',monospace;letter-spacing:-0.703px;-webkit-text-stroke:0.35px #CF8E6D;">new</span>
<span class="t" style="left:2452.00px;top:1029.56px;font-size:34.5px;color:#BCBEC4;font-family:'Liberation Mono',monospace;letter-spacing:-0.703px;-webkit-text-stroke:0.35px #BCBEC4;"> ApplicationPidFileWriter</span>
<span class="t" style="left:1032.00px;top:1125.56px;font-size:34.5px;color:#CF8E6D;font-family:'Liberation Mono',monospace;letter-spacing:-0.703px;-webkit-text-stroke:0.35px #CF8E6D;">public</span>
<span class="t" style="left:1152.00px;top:1125.56px;font-size:34.5px;color:#BCBEC4;font-family:'Liberation Mono',monospace;letter-spacing:-0.703px;-webkit-text-stroke:0.35px #BCBEC4;"> </span>
<span class="t" style="left:1172.00px;top:1125.56px;font-size:34.5px;color:#CF8E6D;font-family:'Liberation Mono',monospace;letter-spacing:-0.703px;-webkit-text-stroke:0.35px #CF8E6D;">static</span>
<span class="t" style="left:1292.00px;top:1125.56px;font-size:34.5px;color:#BCBEC4;font-family:'Liberation Mono',monospace;letter-spacing:-0.703px;-webkit-text-stroke:0.35px #BCBEC4;"> </span>
<span class="t" style="left:1312.00px;top:1125.56px;font-size:34.5px;color:#CF8E6D;font-family:'Liberation Mono',monospace;letter-spacing:-0.703px;-webkit-text-stroke:0.35px #CF8E6D;">void</span>
<span class="t" style="left:1392.00px;top:1125.56px;font-size:34.5px;color:#BCBEC4;font-family:'Liberation Mono',monospace;letter-spacing:-0.703px;-webkit-text-stroke:0.35px #BCBEC4;"> </span>
<span class="t" style="left:1412.00px;top:1125.56px;font-size:34.5px;color:#56A8F5;font-family:'Liberation Mono',monospace;letter-spacing:-0.703px;-webkit-text-stroke:0.35px #56A8F5;">main</span>
<span class="t" style="left:1492.00px;top:1125.56px;font-size:34.5px;color:#BCBEC4;font-family:'Liberation Mono',monospace;letter-spacing:-0.703px;-webkit-text-stroke:0.35px #BCBEC4;">(String[] args)</span>
<div class="r" style="left:1792px;top:1110px;width:60px;height:58px;background:#393B40;"></div>
<span class="t" style="left:1792.00px;top:1125.56px;font-size:34.5px;color:#868A91;font-family:'Liberation Mono',monospace;letter-spacing:-0.703px;"> { </span>
<span class="t" style="left:1852.00px;top:1125.56px;font-size:34.5px;color:#BCBEC4;font-family:'Liberation Mono',monospace;letter-spacing:-0.703px;-webkit-text-stroke:0.35px #BCBEC4;">SpringApplication.</span>
<span class="t" style="left:2212.00px;top:1125.56px;font-size:34.5px;color:#BCBEC4;font-family:'Liberation Mono',monospace;font-style:italic;letter-spacing:-0.703px;-webkit-text-stroke:0.35px #BCBEC4;">run</span>
<span class="t" style="left:2272.00px;top:1125.56px;font-size:34.5px;color:#BCBEC4;font-family:'Liberation Mono',monospace;letter-spacing:-0.703px;-webkit-text-stroke:0.35px #BCBEC4;">(Application.</span>
<span class="t" style="left:2532.00px;top:1125.56px;font-size:34.5px;color:#CF8E6D;font-family:'Liberation Mono',monospace;letter-spacing:-0.703px;-webkit-text-stroke:0.35px #CF8E6D;">class</span>
<span class="t" style="left:2632.00px;top:1125.56px;font-size:34.5px;color:#BCBEC4;font-family:'Liberation Mono',monospace;letter-spacing:-0.703px;-webkit-text-stroke:0.35px #BCBEC4;">, args);</span>
<div class="r" style="left:2793px;top:1110px;width:8px;height:58px;background:#393B40;"></div>
<span class="t" style="left:952.00px;top:1183.56px;font-size:34.5px;color:#BCBEC4;font-family:'Liberation Mono',monospace;letter-spacing:-0.703px;-webkit-text-stroke:0.35px #BCBEC4;">}</span>
<svg class="r" style="left:2352.0px;top:618px;" width="222" height="6" viewBox="0 0 222 6" fill="none"><polyline points="0,4 4,0 8,4 12,0 16,4 20,0 24,4 28,0 32,4 36,0 40,4 44,0 48,4 52,0 56,4 60,0 64,4 68,0 72,4 76,0 80,4 84,0 88,4 92,0 96,4 100,0 104,4 108,0 112,4 116,0 120,4 124,0 128,4 132,0 136,4 140,0 144,4 148,0 152,4 156,0 160,4 164,0 168,4 172,0 176,4 180,0 184,4 188,0 192,4 196,0 200,4 204,0 208,4 212,0 216,4 220,0" stroke="#6AAB73" stroke-width="1.5" fill="none"/></svg>
<svg class="r" style="left:1428px;top:414px;" width="24" height="22" viewBox="0 0 24 22" fill="none"><circle cx="12" cy="6.3" r="5.6" fill="#848B93"/><path d="M1 20.5 L1 19.5 C1 15.5 6 14 12 14 C18 14 23 15.5 23 19.5 L23 20.5 Z" fill="#848B93"/></svg>
<span class="t" style="left:1461.00px;top:409.94px;font-size:33.5px;color:#7E838B;letter-spacing:1.422px;">zhouhw</span>
<svg class="r" style="left:1168px;top:974px;" width="24" height="22" viewBox="0 0 24 22" fill="none"><circle cx="12" cy="6.3" r="5.6" fill="#848B93"/><path d="M1 20.5 L1 19.5 C1 15.5 6 14 12 14 C18 14 23 15.5 23 19.5 L23 20.5 Z" fill="#848B93"/></svg>
<span class="t" style="left:1201.00px;top:969.94px;font-size:33.5px;color:#7E838B;letter-spacing:1.422px;">zhouhw</span>
<svg class="r" style="left:1031.5px;top:918.5px;" width="35" height="35" viewBox="0 0 40 40" fill="none"><path d="M13.85 -0.10 L21.13 -0.10 L23.56 4.55 L34.48 4.55 L37.10 9.40 L34.27 15.07 L40.48 24.72 L36.84 31.03 L31.60 30.81 L26.14 40.27 L20.63 40.11 L17.13 34.82 L5.67 35.38 L2.03 29.07 L4.84 24.64 L-0.62 15.18 L2.27 10.49 L8.60 10.11 Z" fill="#85888E" stroke="#85888E" stroke-width="0.8" stroke-linejoin="round"/><path d="M14.18 1.30 L16.77 5.60 L14.46 10.20 L35.70 10.20 L33.50 14.70 L12.64 14.70 L9.90 9.50 Z" fill="#3A3C40"/><path d="M39.10 24.31 L34.09 24.40 L31.26 20.10 L20.64 38.50 L17.84 34.34 L28.27 16.28 L34.14 16.50 Z" fill="#3A3C40"/><path d="M6.72 34.39 L9.14 30.00 L14.28 29.70 L3.66 11.30 L8.66 10.96 L19.09 29.02 L15.96 34.00 Z" fill="#3A3C40"/></svg>
<svg class="r" style="left:1073px;top:930px;" width="21" height="13" viewBox="0 0 21 13" fill="none"><path d="M2 2 L10.5 11 L19 2" stroke="#CED0D6" stroke-width="2.2" fill="none" stroke-linecap="round" stroke-linejoin="round" /></svg>
<svg class="r" style="left:1031.5px;top:1072.5px;" width="35" height="35" viewBox="0 0 40 40" fill="none"><path d="M13.85 -0.10 L21.13 -0.10 L23.56 4.55 L34.48 4.55 L37.10 9.40 L34.27 15.07 L40.48 24.72 L36.84 31.03 L31.60 30.81 L26.14 40.27 L20.63 40.11 L17.13 34.82 L5.67 35.38 L2.03 29.07 L4.84 24.64 L-0.62 15.18 L2.27 10.49 L8.60 10.11 Z" fill="#85888E" stroke="#85888E" stroke-width="0.8" stroke-linejoin="round"/><path d="M14.18 1.30 L16.77 5.60 L14.46 10.20 L35.70 10.20 L33.50 14.70 L12.64 14.70 L9.90 9.50 Z" fill="#3A3C40"/><path d="M39.10 24.31 L34.09 24.40 L31.26 20.10 L20.64 38.50 L17.84 34.34 L28.27 16.28 L34.14 16.50 Z" fill="#3A3C40"/><path d="M6.72 34.39 L9.14 30.00 L14.28 29.70 L3.66 11.30 L8.66 10.96 L19.09 29.02 L15.96 34.00 Z" fill="#3A3C40"/></svg>
<svg class="r" style="left:1073px;top:1084px;" width="21" height="13" viewBox="0 0 21 13" fill="none"><path d="M2 2 L10.5 11 L19 2" stroke="#CED0D6" stroke-width="2.2" fill="none" stroke-linecap="round" stroke-linejoin="round" /></svg>
<svg class="r" style="left:866px;top:402.5px;" width="44" height="46" viewBox="-2 -2 44 46" fill="none"><ellipse cx="19" cy="19" rx="19.2" ry="16.6" transform="rotate(40 19 19)" stroke="#57965C" stroke-width="2.4" fill="#253627"/><path d="M7 6.5 L31 31.5" stroke="#57965C" stroke-width="2.5" fill="none" stroke-linecap="round" stroke-linejoin="round" /><path d="M27 34 L41 20 L41 45 L27 45 Z" fill="#1E1F22"/><path d="M40 30 L40 40 L30 40 Z" fill="#CED0D6"/></svg>
<svg class="r" style="left:866px;top:460.5px;" width="44" height="46" viewBox="-2 -2 44 46" fill="none"><ellipse cx="19" cy="19" rx="19.2" ry="16.6" transform="rotate(40 19 19)" stroke="#57965C" stroke-width="2.4" fill="#253627"/><path d="M7 6.5 L31 31.5" stroke="#57965C" stroke-width="2.5" fill="none" stroke-linecap="round" stroke-linejoin="round" /><circle cx="27" cy="28.5" r="11" fill="#1E1F22"/><path d="M31 33 L38 40" stroke="#1E1F22" stroke-width="7" stroke-linecap="round"/><circle cx="27" cy="28.5" r="7" stroke="#CED0D6" stroke-width="2.6" fill="#43454A"/><path d="M32.5 34 L37 38.5" stroke="#CED0D6" stroke-width="2.8" fill="none" stroke-linecap="round" stroke-linejoin="round" /></svg>
<svg class="r" style="left:866px;top:576.5px;" width="44" height="46" viewBox="-2 -2 44 46" fill="none"><ellipse cx="19" cy="19" rx="19.2" ry="16.6" transform="rotate(40 19 19)" stroke="#57965C" stroke-width="2.4" fill="#253627"/><path d="M7 6.5 L31 31.5" stroke="#57965C" stroke-width="2.5" fill="none" stroke-linecap="round" stroke-linejoin="round" /><circle cx="27" cy="28.5" r="11" fill="#1E1F22"/><path d="M31 33 L38 40" stroke="#1E1F22" stroke-width="7" stroke-linecap="round"/><circle cx="27" cy="28.5" r="7" stroke="#CED0D6" stroke-width="2.6" fill="#43454A"/><path d="M32.5 34 L37 38.5" stroke="#CED0D6" stroke-width="2.8" fill="none" stroke-linecap="round" stroke-linejoin="round" /></svg>
<svg class="r" style="left:866px;top:692.5px;" width="44" height="46" viewBox="-2 -2 44 46" fill="none"><ellipse cx="19" cy="19" rx="19.2" ry="16.6" transform="rotate(40 19 19)" stroke="#57965C" stroke-width="2.4" fill="#253627"/><path d="M7 6.5 L31 31.5" stroke="#57965C" stroke-width="2.5" fill="none" stroke-linecap="round" stroke-linejoin="round" /><circle cx="27" cy="28.5" r="11" fill="#1E1F22"/><path d="M31 33 L38 40" stroke="#1E1F22" stroke-width="7" stroke-linecap="round"/><circle cx="27" cy="28.5" r="7" stroke="#CED0D6" stroke-width="2.6" fill="#43454A"/><path d="M32.5 34 L37 38.5" stroke="#CED0D6" stroke-width="2.8" fill="none" stroke-linecap="round" stroke-linejoin="round" /></svg>
<svg class="r" style="left:866px;top:962.5px;" width="44" height="46" viewBox="-2 -2 44 46" fill="none"><ellipse cx="19" cy="19" rx="19.2" ry="16.6" transform="rotate(40 19 19)" stroke="#57965C" stroke-width="2.4" fill="#253627"/><path d="M7 6.5 L31 31.5" stroke="#57965C" stroke-width="2.5" fill="none" stroke-linecap="round" stroke-linejoin="round" /><path d="M1 29.5 H21 M10.5 20 L1 29.5 L10.5 39" stroke="#1E1F22" stroke-width="7" fill="none" stroke-linecap="round" stroke-linejoin="round"/><path d="M1.5 29.5 H21 M10.5 20.5 L1.5 29.5 L10.5 38.5" stroke="#DFE1E5" stroke-width="2.6" fill="none" stroke-linecap="round" stroke-linejoin="round" /></svg>
<svg class="r" style="left:870px;top:871px;" width="36" height="38" viewBox="0 0 36 38" fill="none"><path d="M2.5 3.5 L31.5 18.5 L2.5 34.5 Z" stroke="#57965C" stroke-width="2.6" fill="#253627" stroke-linejoin="round"/></svg>
<svg class="r" style="left:870px;top:1121px;" width="36" height="38" viewBox="0 0 36 38" fill="none"><path d="M2.5 3.5 L31.5 18.5 L2.5 34.5 Z" stroke="#57965C" stroke-width="2.6" fill="#253627" stroke-linejoin="round"/></svg>
<svg class="r" style="left:923.5px;top:298px;" width="15.3" height="24.5" viewBox="0 0 15.3 24.5" fill="none"><path d="M2 2 L13.3 12.25 L2 22.5" stroke="#6F737A" stroke-width="2.4" fill="none" stroke-linecap="round" stroke-linejoin="round" /></svg>
<svg class="r" style="left:923.5px;top:1032px;" width="15.3" height="24.5" viewBox="0 0 15.3 24.5" fill="none"><path d="M2 2 L13.3 12.25 L2 22.5" stroke="#6F737A" stroke-width="2.4" fill="none" stroke-linecap="round" stroke-linejoin="round" /></svg>
<svg class="r" style="left:923.5px;top:1128px;" width="15.3" height="24.5" viewBox="0 0 15.3 24.5" fill="none"><path d="M2 2 L13.3 12.25 L2 22.5" stroke="#6F737A" stroke-width="2.4" fill="none" stroke-linecap="round" stroke-linejoin="round" /></svg>
</div>
<svg class="r" style="left:2822px;top:196px;" width="36" height="24" viewBox="0 0 36 24" fill="none"><path d="M11 19.6 Q20 22.6 30 19.6" stroke="#CED0D6" stroke-width="2.6" fill="none" stroke-linecap="round" stroke-linejoin="round" /></svg>
<svg class="r" style="left:2810px;top:250px;" width="70" height="70" viewBox="0 0 70 70" fill="none"><ellipse cx="32.05" cy="20.8" rx="14.65" ry="5.6" stroke="#CED0D6" stroke-width="2.9" fill="none"/><path d="M17.4 20.8 V43.3 A14.65 5.6 0 0 0 46.7 43.3 V20.8 M17.4 28.3 A14.65 5.6 0 0 0 46.7 28.3 M17.4 35.8 A14.65 5.6 0 0 0 46.7 35.8" stroke="#CED0D6" stroke-width="2.9" fill="none" stroke-linecap="round" stroke-linejoin="round" /></svg>
<svg class="r" style="left:2822px;top:342px;" width="40" height="40" viewBox="0 0 40 40" fill="none"><path d="M13.85 -0.10 L21.13 -0.10 L23.56 4.55 L34.48 4.55 L37.10 9.40 L34.27 15.07 L40.48 24.72 L36.84 31.03 L31.60 30.81 L26.14 40.27 L20.63 40.11 L17.13 34.82 L5.67 35.38 L2.03 29.07 L4.84 24.64 L-0.62 15.18 L2.27 10.49 L8.60 10.11 Z" fill="#CCCCCC" stroke="#CCCCCC" stroke-width="0.8" stroke-linejoin="round"/><path d="M14.18 1.30 L16.77 5.60 L14.46 10.20 L35.70 10.20 L33.50 14.70 L12.64 14.70 L9.90 9.50 Z" fill="#2B2D30"/><path d="M39.10 24.31 L34.09 24.40 L31.26 20.10 L20.64 38.50 L17.84 34.34 L28.27 16.28 L34.14 16.50 Z" fill="#2B2D30"/><path d="M6.72 34.39 L9.14 30.00 L14.28 29.70 L3.66 11.30 L8.66 10.96 L19.09 29.02 L15.96 34.00 Z" fill="#2B2D30"/></svg>
<span class="t" style="left:2823.00px;top:415.21px;font-size:47px;color:#CED0D6;font-style:italic;letter-spacing:-1.153px;-webkit-text-stroke:0.8px #CED0D6;">m</span>
<div class="r" style="left:2773px;top:330px;width:27px;height:4px;background:#587C6C;"></div>
<div class="r" style="left:2773px;top:850px;width:27px;height:4px;background:#587C6C;"></div>
<svg class="r" style="left:2598px;top:176px;" width="28" height="26" viewBox="0 0 28 26" fill="none"><path d="M14 5.2 L23.8 22 L4.2 22 Z" fill="#C9A24D" stroke="#C9A24D" stroke-width="4.4" stroke-linejoin="round"/><path d="M14 8.8 V16" stroke="#1E1F22" stroke-width="3" stroke-linecap="round"/><circle cx="14" cy="20.6" r="1.7" fill="#1E1F22"/></svg>
<span class="t" style="left:2628.00px;top:178.29px;font-size:26px;color:#CED0D6;">1</span>
<div class="r" style="left:2651px;top:168px;width:222px;height:48px;background:#333333;border-radius:7px;"></div>
<svg class="r" style="left:2661px;top:168px;" width="52" height="48" viewBox="0 0 52 48" fill="none"><rect x="4.6" y="14.05" width="43" height="19.8" rx="2.5" stroke="#00A9F2" stroke-width="4.4" fill="none"/><path d="M26.2 0 V48" stroke="#00A9F2" stroke-width="4.2"/></svg>
<svg class="r" style="left:2724px;top:176px;" width="36" height="36" viewBox="0 0 36 36" fill="none"><circle cx="9.9" cy="9.2" r="5.4" stroke="#C8C8C8" stroke-width="2.3" fill="none"/><path d="M23.6 19.4 h5.2 v4.2 q0 5 -5.6 8.8 l-1.3 -1.3 q3 -3.2 3 -6.3 h-1.3 z" fill="#C8C8C8"/></svg>
<svg class="r" style="left:2768px;top:174px;" width="38" height="38" viewBox="0 0 38 38" fill="none"><path d="M7.3 3.4 L12.7 11.8 M30.7 3.4 L25.9 11.8 M5.5 14.8 H32.5 M3 23.4 H35 M18.7 2.8 V34.6" stroke="#C8C8C8" stroke-width="2.8" fill="none"/></svg>
<svg class="r" style="left:2816px;top:172px;" width="44" height="40" viewBox="0 0 44 40" fill="none"><path d="M9.5 4 Q14 3.5 14.5 5 Q22 15 29.5 5 Q30 3.5 34.5 4 Q38 4.5 40 9 L42.7 15 Q43 17 41 17.6 L35 20 L35 35.5 Q35 37.8 32.7 37.8 L11.3 37.8 Q9 37.8 9 35.5 L9 20 L3 17.6 Q1 17 1.3 15 L4 9 Q6 4.5 9.5 4 Z" fill="#D0D0D0"/></svg>
<div class="r" style="left:953px;top:1627px;width:1811px;height:18px;background:#26282B;"></div>
<div class="r" style="left:953px;top:1628px;width:1297px;height:16px;background:#55575A;"></div>
<svg class="r" style="left:28px;top:1667.5px;" width="18" height="18" viewBox="0 0 18 18" fill="none"><rect x="1.3" y="1.3" width="13.6" height="13.6" rx="3.4" stroke="#548AF7" stroke-width="2.3" fill="#25324D"/></svg>
<span class="t" style="left:52.00px;top:1662.99px;font-size:26px;color:#A3A6AD;letter-spacing:0.128px;">esb-governor-910sp</span>
<svg class="r" style="left:303.5px;top:1665.5px;" width="12" height="19.5" viewBox="0 0 12 19.5" fill="none"><path d="M2 2 L10 9.75 L2 17.5" stroke="#9DA0A8" stroke-width="2.2" fill="none" stroke-linecap="round" stroke-linejoin="round" /></svg>
<svg class="r" style="left:334px;top:1667.5px;" width="18" height="18" viewBox="0 0 18 18" fill="none"><rect x="1.3" y="1.3" width="13.6" height="13.6" rx="3.4" stroke="#548AF7" stroke-width="2.3" fill="#25324D"/></svg>
<span class="t" style="left:358.00px;top:1662.99px;font-size:26px;color:#A3A6AD;letter-spacing:0.070px;">com.primeton.esb.governor.esbafcboot</span>
<svg class="r" style="left:824.5px;top:1665.5px;" width="12" height="19.5" viewBox="0 0 12 19.5" fill="none"><path d="M2 2 L10 9.75 L2 17.5" stroke="#9DA0A8" stroke-width="2.2" fill="none" stroke-linecap="round" stroke-linejoin="round" /></svg>
<span class="t" style="left:855.00px;top:1662.99px;font-size:26px;color:#A3A6AD;letter-spacing:-0.220px;">src</span>
<svg class="r" style="left:904.5px;top:1665.5px;" width="12" height="19.5" viewBox="0 0 12 19.5" fill="none"><path d="M2 2 L10 9.75 L2 17.5" stroke="#9DA0A8" stroke-width="2.2" fill="none" stroke-linecap="round" stroke-linejoin="round" /></svg>
<span class="t" style="left:935.00px;top:1662.99px;font-size:26px;color:#A3A6AD;letter-spacing:0.627px;">com</span>
<svg class="r" style="left:1003.5px;top:1665.5px;" width="12" height="19.5" viewBox="0 0 12 19.5" fill="none"><path d="M2 2 L10 9.75 L2 17.5" stroke="#9DA0A8" stroke-width="2.2" fill="none" stroke-linecap="round" stroke-linejoin="round" /></svg>
<span class="t" style="left:1034.00px;top:1662.99px;font-size:26px;color:#A3A6AD;letter-spacing:0.480px;">primeton</span>
<svg class="r" style="left:1156.5px;top:1665.5px;" width="12" height="19.5" viewBox="0 0 12 19.5" fill="none"><path d="M2 2 L10 9.75 L2 17.5" stroke="#9DA0A8" stroke-width="2.2" fill="none" stroke-linecap="round" stroke-linejoin="round" /></svg>
<span class="t" style="left:1187.00px;top:1662.99px;font-size:26px;color:#A3A6AD;letter-spacing:0.026px;">esb</span>
<svg class="r" style="left:1245.5px;top:1665.5px;" width="12" height="19.5" viewBox="0 0 12 19.5" fill="none"><path d="M2 2 L10 9.75 L2 17.5" stroke="#9DA0A8" stroke-width="2.2" fill="none" stroke-linecap="round" stroke-linejoin="round" /></svg>
<span class="t" style="left:1276.00px;top:1662.99px;font-size:26px;color:#A3A6AD;letter-spacing:0.422px;">governor</span>
<svg class="r" style="left:1399.5px;top:1665.5px;" width="12" height="19.5" viewBox="0 0 12 19.5" fill="none"><path d="M2 2 L10 9.75 L2 17.5" stroke="#9DA0A8" stroke-width="2.2" fill="none" stroke-linecap="round" stroke-linejoin="round" /></svg>
<span class="t" style="left:1429.00px;top:1662.99px;font-size:26px;color:#A3A6AD;letter-spacing:0.179px;">esbafcboot</span>
<svg class="r" style="left:1574.5px;top:1665.5px;" width="12" height="19.5" viewBox="0 0 12 19.5" fill="none"><path d="M2 2 L10 9.75 L2 17.5" stroke="#9DA0A8" stroke-width="2.2" fill="none" stroke-linecap="round" stroke-linejoin="round" /></svg>
<svg class="r" style="left:1608.2px;top:1655.7px;" width="34" height="36" viewBox="0 -2 34 36" fill="none"><circle cx="14.1" cy="14.9" r="13.1" stroke="#548AF7" stroke-width="2.1" fill="#25324D"/><path d="M17.57 10.76 A5.4 5.4 0 1 0 17.57 19.04" stroke="#548AF7" stroke-width="2.1" fill="none" stroke-linecap="round" stroke-linejoin="round" /><circle cx="23" cy="24.7" r="9" fill="#2B2D30"/><path d="M17.5 0.5 L28.6 6.9 L17.5 13.3 Z" fill="#2B2D30" stroke="#2B2D30" stroke-width="5" stroke-linejoin="round"/><path d="M17.5 0.5 L28.6 6.9 L17.5 13.3 Z" fill="#253627" stroke="#57965C" stroke-width="2" stroke-linejoin="round"/><path d="M20.3 19.3 A6.1 6.1 0 1 0 25.7 19.3 M23 16.3 V21.8" stroke="#CED0D6" stroke-width="2.3" fill="none" stroke-linecap="round" stroke-linejoin="round" /></svg>
<span class="t" style="left:1645.00px;top:1662.99px;font-size:26px;color:#A3A6AD;letter-spacing:0.255px;">Application</span>
<span class="t" style="left:2322.00px;top:1662.99px;font-size:26px;color:#A3A6AD;letter-spacing:-0.413px;">23:18</span>
<span class="t" style="left:2416.00px;top:1662.99px;font-size:26px;color:#A3A6AD;letter-spacing:-2.474px;">CRLF</span>
<span class="t" style="left:2506.00px;top:1662.99px;font-size:26px;color:#A3A6AD;letter-spacing:-0.732px;">UTF-8</span>
<span class="t" style="left:2615.00px;top:1662.99px;font-size:26px;color:#A3A6AD;letter-spacing:-0.758px;">4 spaces</span>
<svg class="r" style="left:2755px;top:1658px;" width="30" height="32" viewBox="0 0 30 32" fill="none"><rect x="2.2" y="15.2" width="17.7" height="13.8" rx="3.6" stroke="#CED0D6" stroke-width="2.3" fill="none"/><path d="M15.8 15 V12.2 A5.15 5.15 0 0 1 26.1 12.2 V15.6" stroke="#CED0D6" stroke-width="2.3" fill="none" stroke-linecap="round" stroke-linejoin="round" /><path d="M10.9 19.8 V24.4" stroke="#CED0D6" stroke-width="2.4" fill="none" stroke-linecap="round" stroke-linejoin="round" /></svg>
<svg class="r" style="left:2815px;top:1660px;" width="32" height="32" viewBox="0 0 32 32" fill="none"><circle cx="14.8" cy="15.9" r="12.9" stroke="#CED0D6" stroke-width="2.3" fill="none"/><path d="M14.8 10.4 V15.8" stroke="#CED0D6" stroke-width="3.8" fill="none" stroke-linecap="round" stroke-linejoin="round" /><circle cx="14.8" cy="22" r="2.1" fill="#CED0D6"/></svg>
<div class="r" style="left:1540px;top:1708px;width:72px;height:12px;background:#2B2D30;border-radius:8px 8px 0 0;border:1px solid #3a3c40;"></div>
</body></html>
